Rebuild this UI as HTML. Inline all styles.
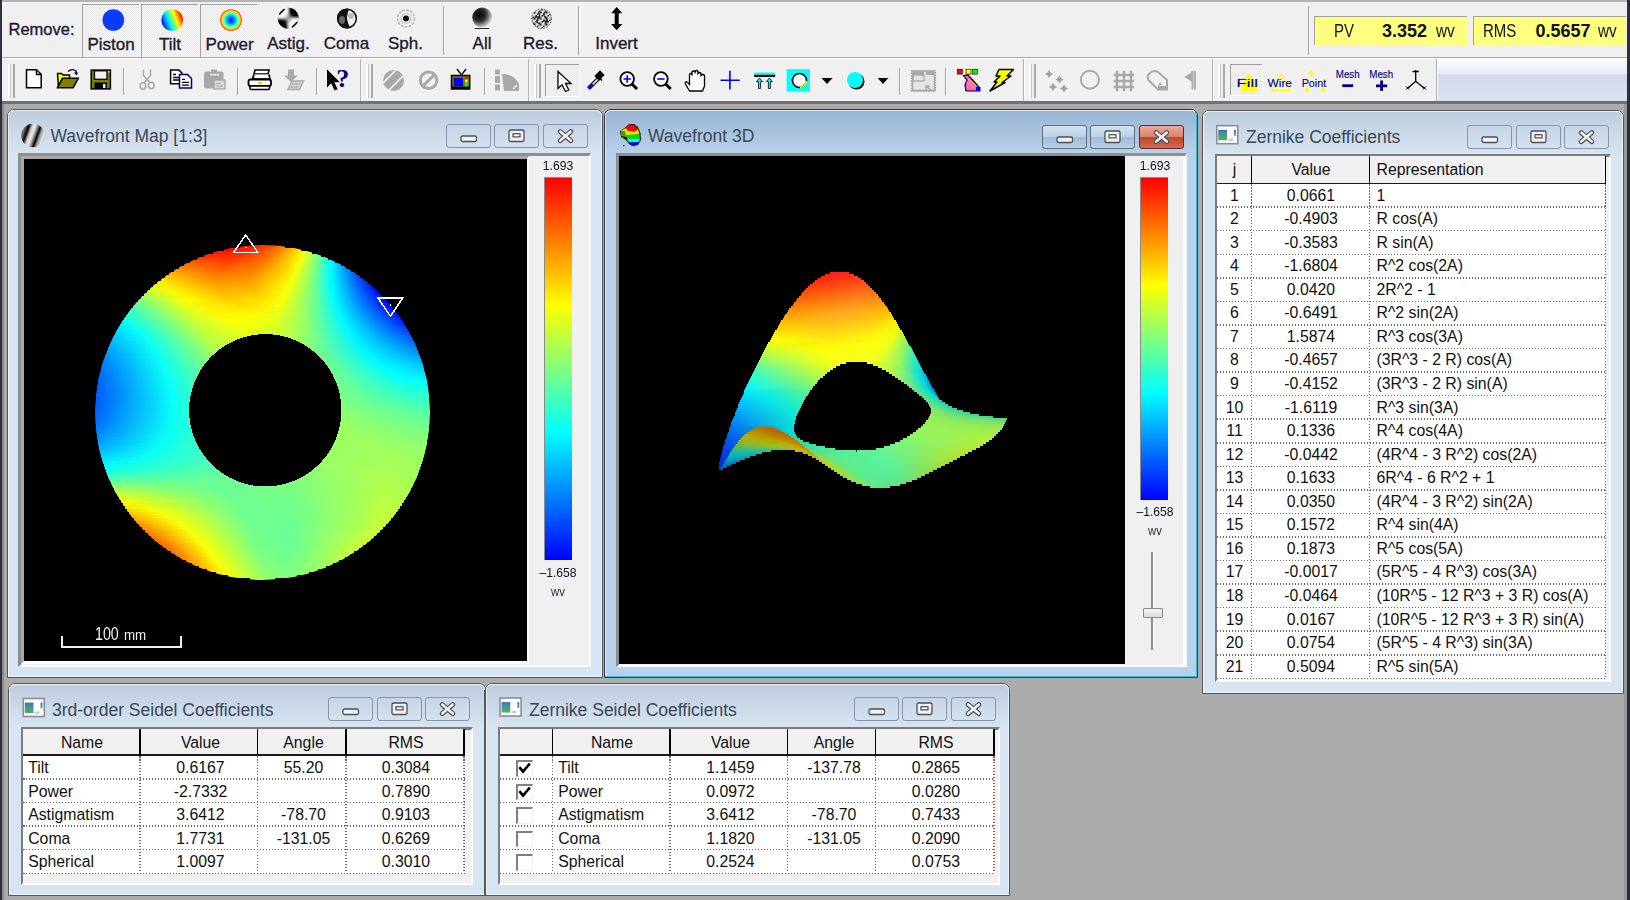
<!DOCTYPE html>
<html><head><meta charset="utf-8"><title>Wavefront</title><style>*{box-sizing:border-box;margin:0;padding:0}
html,body{width:1630px;height:900px;overflow:hidden}
body{position:relative;background:#ababab;font-family:"Liberation Sans",sans-serif;color:#000}
.a{position:absolute}
svg.a{overflow:visible}
.t{line-height:1;white-space:nowrap}
.tl{color:#1e1a2e;-webkit-text-stroke:0.35px #1e1a2e}
.win{border:1px solid #52565c;border-radius:7px 7px 0 0;background:#d7e4f2}
.tg{background:linear-gradient(#bdccdc,#d7e4f2);border-radius:6px 6px 0 0}
.act{background:#b9d1ea;border-color:#30363c}
.act .tg{background:linear-gradient(#98b3d2,#b9d1ea)}
.ttl{color:#3a4756}
.btn{border:1px solid #8595ae;border-radius:3px;background:linear-gradient(#c6d5e5,#d3e0ee)}
.abtn{border:1px solid #5d6d82;border-radius:3px;background:linear-gradient(#d2e2f2 0,#bdd1e7 48%,#a1bbd8 52%,#b9cfe7 100%)}
.cbtn{border:1px solid #5e2a26;border-radius:3px;background:linear-gradient(#eaa897 0,#da8470 48%,#c3452c 52%,#d06a52 100%)}
.sunk{border-top:2px solid #8c8c8c;border-left:2px solid #8c8c8c;border-bottom:2px solid #fff;border-right:2px solid #fff}
.cb{background:linear-gradient(#f00,#ff0 33.33%,#0ff 66.67%,#00f)}
.dh{background:repeating-linear-gradient(90deg,#6a6a6a 0 1.5px,transparent 1.5px 3px)}
.dv{background:repeating-linear-gradient(180deg,#6a6a6a 0 1.5px,transparent 1.5px 3px)}
</style></head><body><div class="a" style="left:0px;top:0px;width:1630px;height:102px;background:#f0f0f0"></div><div class="a" style="left:0px;top:0px;width:1630px;height:2px;background:#b4b4b4"></div><div class="a" style="left:0px;top:57px;width:1630px;height:2px;background:#a8a8a8;border-bottom:1px solid #fff"></div><div class="a" style="left:0px;top:101px;width:1630px;height:3px;background:#707070"></div><div class="a" style="left:0px;top:0px;width:2px;height:900px;background:#2e2e3a"></div><div class="a" style="left:1627px;top:0px;width:3px;height:900px;background:#2e2e3a"></div><div class="a" style="left:1624px;top:104px;width:3px;height:796px;background:#9a9a9a"></div><div class="a" style="left:2px;top:104px;width:2px;height:796px;background:#8a8a8a"></div><div class="a t tl" style="left:8.5px;top:21.32px;font-size:16.5px;">Remove:</div><div class="a" style="left:82px;top:4px;width:57px;height:53px;border-top:1px solid #a0a0a0;border-left:1px solid #a0a0a0;background:repeating-conic-gradient(#f6f6f6 0 25%,#e9e9e9 0 50%) 0 0/2px 2px"></div><div class="a" style="left:141px;top:4px;width:57px;height:53px;border-top:1px solid #a0a0a0;border-left:1px solid #a0a0a0;background:repeating-conic-gradient(#f6f6f6 0 25%,#e9e9e9 0 50%) 0 0/2px 2px"></div><div class="a" style="left:200px;top:4px;width:57px;height:53px;border-top:1px solid #a0a0a0;border-left:1px solid #a0a0a0;background:repeating-conic-gradient(#f6f6f6 0 25%,#e9e9e9 0 50%) 0 0/2px 2px"></div><div class="a t tl" style="left:-39.0px;width:300px;text-align:center;top:36.10px;font-size:17px;">Piston</div><div class="a t tl" style="left:20.0px;width:300px;text-align:center;top:36.10px;font-size:17px;">Tilt</div><div class="a t tl" style="left:79.5px;width:300px;text-align:center;top:36.10px;font-size:17px;">Power</div><div class="a t tl" style="left:138.5px;width:300px;text-align:center;top:34.90px;font-size:17px;">Astig.</div><div class="a t tl" style="left:196.5px;width:300px;text-align:center;top:34.90px;font-size:17px;">Coma</div><div class="a t tl" style="left:255.5px;width:300px;text-align:center;top:34.90px;font-size:17px;">Sph.</div><div class="a t tl" style="left:332.0px;width:300px;text-align:center;top:34.90px;font-size:17px;">All</div><div class="a t tl" style="left:390.5px;width:300px;text-align:center;top:34.90px;font-size:17px;">Res.</div><div class="a t tl" style="left:466.5px;width:300px;text-align:center;top:34.90px;font-size:17px;">Invert</div><div class="a" style="left:443px;top:6px;width:1px;height:49px;background:#a0a0a0;box-shadow:1px 0 0 #fff"></div><div class="a" style="left:578px;top:6px;width:1px;height:49px;background:#a0a0a0;box-shadow:1px 0 0 #fff"></div><div class="a" style="left:1308px;top:6px;width:1px;height:49px;background:#a0a0a0;box-shadow:1px 0 0 #fff"></div><div class="a" style="left:1314px;top:16px;width:153px;height:29px;background:#ffff80;border-top:1.5px solid #a0a0a0;border-left:1.5px solid #a0a0a0"></div><div class="a" style="left:1473px;top:16px;width:153px;height:29px;background:#ffff80;border-top:1.5px solid #a0a0a0;border-left:1.5px solid #a0a0a0"></div><div class="a t " style="left:1333.5px;top:21.75px;font-size:18px;transform:scaleX(0.83);transform-origin:0 0;color:#111">PV</div><div class="a t " style="left:1382.0px;top:21.75px;font-size:18px;font-weight:bold;color:#111">3.352</div><div class="a t " style="left:1435.5px;top:21.75px;font-size:18px;transform:scaleX(0.85);transform-origin:0 0;color:#111">wv</div><div class="a t " style="left:1482.5px;top:21.75px;font-size:18px;transform:scaleX(0.83);transform-origin:0 0;color:#111">RMS</div><div class="a t " style="left:1535.5px;top:21.75px;font-size:18px;font-weight:bold;color:#111">0.5657</div><div class="a t " style="left:1597.5px;top:21.75px;font-size:18px;transform:scaleX(0.85);transform-origin:0 0;color:#111">wv</div><div class="a" style="left:8px;top:64px;width:7px;height:34px;border-left:2px solid #fff;border-right:2px solid #a8a8a8;box-shadow:inset 1px 0 0 #c4c4c4"></div><div class="a" style="left:366px;top:64px;width:7px;height:34px;border-left:2px solid #fff;border-right:2px solid #a8a8a8;box-shadow:inset 1px 0 0 #c4c4c4"></div><div class="a" style="left:534px;top:64px;width:7px;height:34px;border-left:2px solid #fff;border-right:2px solid #a8a8a8;box-shadow:inset 1px 0 0 #c4c4c4"></div><div class="a" style="left:1029px;top:64px;width:7px;height:34px;border-left:2px solid #fff;border-right:2px solid #a8a8a8;box-shadow:inset 1px 0 0 #c4c4c4"></div><div class="a" style="left:1218px;top:64px;width:7px;height:34px;border-left:2px solid #fff;border-right:2px solid #a8a8a8;box-shadow:inset 1px 0 0 #c4c4c4"></div><div class="a" style="left:360px;top:59px;width:2px;height:42px;background:#b0b0b0;border-right:1px solid #fff"></div><div class="a" style="left:528px;top:59px;width:2px;height:42px;background:#b0b0b0;border-right:1px solid #fff"></div><div class="a" style="left:1023px;top:59px;width:2px;height:42px;background:#b0b0b0;border-right:1px solid #fff"></div><div class="a" style="left:1212px;top:59px;width:2px;height:42px;background:#b0b0b0;border-right:1px solid #fff"></div><div class="a" style="left:1436px;top:59px;width:2px;height:42px;background:#b0b0b0;border-right:1px solid #fff"></div><div class="a" style="left:123px;top:68px;width:1px;height:27px;background:#a0a0a0;box-shadow:1px 0 0 #fff"></div><div class="a" style="left:237px;top:68px;width:1px;height:27px;background:#a0a0a0;box-shadow:1px 0 0 #fff"></div><div class="a" style="left:316px;top:68px;width:1px;height:27px;background:#a0a0a0;box-shadow:1px 0 0 #fff"></div><div class="a" style="left:484px;top:68px;width:1px;height:27px;background:#a0a0a0;box-shadow:1px 0 0 #fff"></div><div class="a" style="left:899px;top:68px;width:1px;height:27px;background:#a0a0a0;box-shadow:1px 0 0 #fff"></div><div class="a" style="left:945px;top:68px;width:1px;height:27px;background:#a0a0a0;box-shadow:1px 0 0 #fff"></div><div class="a" style="left:1438px;top:59px;width:189px;height:42px;background:linear-gradient(#fbfcfd 0,#e8ecf5 35%,#d2d9ea 38%,#dbe1f0 100%)"></div><div class="a" style="left:545px;top:64px;width:34px;height:32px;border-top:1px solid #a0a0a0;border-left:1px solid #a0a0a0;box-shadow:1px 1px 0 #fff;background:repeating-conic-gradient(#f6f6f6 0 25%,#e6e6e6 0 50%) 0 0/2px 2px"></div><div class="a" style="left:1230px;top:64px;width:32px;height:31px;border-top:1px solid #a0a0a0;border-left:1px solid #a0a0a0;box-shadow:1px 1px 0 #fff;background:repeating-conic-gradient(#f6f6f6 0 25%,#e6e6e6 0 50%) 0 0/2px 2px"></div><svg class="a" style="left:0;top:0" width="1630" height="102" viewBox="0 0 1630 102">
<defs>
<linearGradient id="gtilt" x1="0.05" y1="0.68" x2="0.95" y2="0.32"><stop offset="0" stop-color="#0010ff"/><stop offset=".3" stop-color="#00e0ff"/><stop offset=".5" stop-color="#60ff90"/><stop offset=".68" stop-color="#ffff00"/><stop offset="1" stop-color="#ff1000"/></linearGradient>
<radialGradient id="gpow"><stop offset="0" stop-color="#0010ff"/><stop offset=".35" stop-color="#0090ff"/><stop offset=".55" stop-color="#00ffff"/><stop offset=".72" stop-color="#a0ff60"/><stop offset=".85" stop-color="#ffd000"/><stop offset="1" stop-color="#ff2000"/></radialGradient>
<radialGradient id="gall" cx=".35" cy=".35" r=".75"><stop offset="0" stop-color="#000"/><stop offset=".45" stop-color="#303030"/><stop offset=".8" stop-color="#b8b8b8"/><stop offset="1" stop-color="#fff"/></radialGradient>
<radialGradient id="gblk"><stop offset="0" stop-color="#000"/><stop offset=".5" stop-color="#111"/><stop offset="1" stop-color="#000" stop-opacity="0"/></radialGradient>
<radialGradient id="gwht"><stop offset="0" stop-color="#fff"/><stop offset=".5" stop-color="#eee"/><stop offset="1" stop-color="#fff" stop-opacity="0"/></radialGradient>
<pattern id="pres" width="6" height="6" patternUnits="userSpaceOnUse"><rect width="6" height="6" fill="#e0e0e0"/><rect x="0" y="0" width="1.5" height="1.5" fill="#111"/><rect x="3" y="1.5" width="1.5" height="1.5" fill="#333"/><rect x="1.5" y="3" width="1.5" height="1.5" fill="#222"/><rect x="4.5" y="4.5" width="1.5" height="1.5" fill="#444"/><rect x="4.5" y="0" width="1.5" height="1.5" fill="#777"/><rect x="0" y="4.5" width="1.5" height="1.5" fill="#666"/></pattern>
<filter id="fbl" x="-20%" y="-20%" width="140%" height="140%"><feGaussianBlur stdDeviation="1.3"/></filter><clipPath id="cast"><circle cx="288.3" cy="18.3" r="10.6"/></clipPath><radialGradient id="gaB" gradientUnits="userSpaceOnUse" cx="288.3" cy="18.3" r="11"><stop offset="0" stop-color="#000" stop-opacity="0"/><stop offset=".55" stop-color="#000" stop-opacity=".95"/><stop offset="1" stop-color="#000"/></radialGradient><radialGradient id="gaW" gradientUnits="userSpaceOnUse" cx="288.3" cy="18.3" r="11"><stop offset="0" stop-color="#fff" stop-opacity="0"/><stop offset=".5" stop-color="#fff" stop-opacity=".95"/><stop offset="1" stop-color="#fff"/></radialGradient>
<clipPath id="ccom"><circle cx="347" cy="18.5" r="10"/></clipPath>
<clipPath id="cfr"><circle cx="393.6" cy="80.4" r="10.5"/></clipPath>
</defs>
<!-- row1 -->
<circle cx="113.3" cy="20" r="10.8" fill="#0a3cff"/>
<circle cx="172.2" cy="20" r="10.8" fill="url(#gtilt)"/>
<circle cx="231" cy="20" r="10.8" fill="url(#gpow)"/>
<g clip-path="url(#cast)"><rect x="277" y="7" width="23" height="23" fill="#a0a0a0"/>
<g filter="url(#fbl)"><path d="M288.3 18.3 L288.3 7 L300 7 L300 18.3 Z" fill="url(#gaB)"/><path d="M288.3 18.3 L288.3 30 L277 30 L277 18.3 Z" fill="url(#gaB)"/>
<path d="M288.3 18.3 L288.3 7 L277 7 L277 18.3 Z" fill="url(#gaW)"/><path d="M288.3 18.3 L288.3 30 L300 30 L300 18.3 Z" fill="url(#gaW)"/></g>
<path d="M279 14.5 L284.5 9" stroke="#222" stroke-width="1.8"/><path d="M292 27.5 L297.5 22" stroke="#222" stroke-width="1.8"/>
</g>
<g clip-path="url(#ccom)"><rect x="336" y="8" width="22" height="22" fill="#f0f0f0"/><path d="M337 8 L350 8 Q343 18 352 30 L337 30 Z" fill="#111"/><ellipse cx="342" cy="20" rx="3" ry="4" fill="#666"/><ellipse cx="351" cy="16" rx="3" ry="3" fill="#bbb"/></g>
<circle cx="347" cy="18.5" r="9.3" fill="none" stroke="#111" stroke-width="1.6"/>
<circle cx="406" cy="18.5" r="8.5" fill="none" stroke="#b0b0b0" stroke-width="1.5" stroke-dasharray="2.5 1.5"/>
<circle cx="406" cy="18.5" r="5" fill="none" stroke="#d0d0d0" stroke-width="1.5"/>
<circle cx="406" cy="18.5" r="3" fill="#111"/>
<circle cx="482.2" cy="17.6" r="10" fill="url(#gall)"/>
<path d="M474 27 Q482 30 490 27" fill="none" stroke="#fff" stroke-width="1.5"/><path d="M475 28.5 L489 28.5" stroke="#222" stroke-width="1"/>
<circle cx="541.6" cy="18.7" r="9.8" fill="url(#pres)"/>
<circle cx="541.6" cy="18.7" r="9.8" fill="none" stroke="#444" stroke-width="1" stroke-dasharray="1.5 1.5"/>
<path d="M538 12.5 q3 3 0 6 q-3 3 1 5 M544.5 12 q-2 4 2 6 q2 3 -1 5 M535 17 h4 M543 21 h5" fill="none" stroke="#222" stroke-width="1.3"/>
<path d="M616.7 7 L622.3 13.2 L618.7 13.2 L618.7 24 L622.3 24 L616.7 30.3 L611.1 24 L614.7 24 L614.7 13.2 L611.1 13.2 Z" fill="#000"/>
<!-- row2: new -->
<path d="M26.5 69.7 H36.5 L41.2 74.4 V87.7 H26.5 Z" fill="#fff" stroke="#000" stroke-width="1.5"/>
<path d="M36.5 69.7 V74.4 H41.2" fill="none" stroke="#000" stroke-width="1.5"/>
<!-- open -->
<path d="M57.5 73.5 H61.5 L63 75 H69.5 V79 H62 L58.5 87.5 Z" fill="#ffff00" stroke="#000" stroke-width="1.5"/>
<path d="M57.5 87.7 L62.5 78.3 H78.3 L73.2 87.7 Z" fill="#808000" stroke="#000" stroke-width="1.5"/>
<path d="M68 71.5 Q72 68 76 71 L76.5 73.5" fill="none" stroke="#000" stroke-width="1.4"/><path d="M74 72.5 L78 72.5 L76.5 75.5 Z" fill="#000"/>
<!-- save -->
<rect x="91.2" y="70.1" width="19.2" height="18.8" fill="#808000" stroke="#000" stroke-width="1.5"/>
<rect x="94.5" y="70.8" width="12.5" height="8.5" fill="#f0f0f0" stroke="#000" stroke-width="1.3"/>
<rect x="94.5" y="82.5" width="12.5" height="6.5" fill="#000"/><rect x="103" y="84" width="2.5" height="4" fill="#eee"/>
<rect x="108" y="71" width="1.5" height="1.5" fill="#fff"/>
<!-- cut (gray) -->
<g fill="none" stroke="#a8a8a8" stroke-width="1.5"><path d="M143.5 69.5 V75.5 L150 83 M150.5 69.5 V75.5 L144 83"/><ellipse cx="143" cy="86" rx="2.8" ry="3.2"/><ellipse cx="151.3" cy="85.5" rx="2.8" ry="3.2"/></g>
<!-- copy -->
<path d="M170.6 70.1 H179 L182 73 V83.8 H170.6 Z" fill="#fff" stroke="#000" stroke-width="1.5"/>
<path d="M173 74.5 h3 M173 77.5 h6 M173 80 h6" stroke="#000" stroke-width="1.3"/>
<path d="M179.5 74.5 H187.5 L191.5 78.5 V88 H179.5 Z" fill="#fff" stroke="#000080" stroke-width="1.5"/>
<path d="M182 79.3 h3 M182 82.3 h7 M182 85.2 h7" stroke="#000" stroke-width="1.3"/>
<!-- paste gray -->
<rect x="204" y="71.5" width="19.5" height="17" rx="2" fill="#a8a8a8"/><rect x="211" y="69.5" width="6" height="3" fill="#a8a8a8"/><rect x="210" y="74" width="9" height="1.3" fill="#fff"/>
<rect x="214" y="80" width="11" height="9" fill="#d8d8d8" stroke="#a8a8a8" stroke-width="1.3"/><path d="M216 83.5 h5 M216 86 h7" stroke="#a8a8a8" stroke-width="1.2"/>
<!-- print -->
<path d="M255 70 H269 L268 74 H254 Z" fill="#fff" stroke="#000" stroke-width="1.6"/>
<path d="M254 74.5 L252.5 79 H270 L269 74.5" fill="#fff" stroke="#000" stroke-width="1.6"/>
<rect x="248.5" y="79.5" width="22.5" height="6.5" rx="2" fill="#fff" stroke="#000" stroke-width="1.8"/>
<rect x="258" y="82" width="4.5" height="1.8" fill="#e0d000"/>
<rect x="250" y="86" width="19.5" height="3.5" rx="1" fill="#fff" stroke="#000" stroke-width="1.6"/>
<!-- import gray -->
<path d="M288 69.5 H294 V75.5 H298 L291 82 L284 75.5 H288 Z" fill="#a8a8a8"/>
<path d="M288 89.5 L292 81 H303.5 L299.5 89.5 Z" fill="#d0d0d0" stroke="#a8a8a8" stroke-width="1.4"/><path d="M292 84 h8 M290.5 87 h8" stroke="#a8a8a8" stroke-width="1.1"/>
<!-- help -->
<path d="M327 69.3 V87.5 L331.2 83.3 L334.6 90.6 L337.6 89.3 L334.4 82.2 L339.8 82.2 Z" fill="#000"/>
<text x="336.3" y="86.8" font-family="Liberation Serif" font-weight="bold" font-size="26" fill="#000080">?</text>
<!-- fringe gray -->
<g clip-path="url(#cfr)"><rect x="382" y="69" width="24" height="24" fill="#a8a8a8"/><path d="M382 84 L397 69 M386 93 L405 74" stroke="#f0f0f0" stroke-width="1.6"/></g>
<!-- no symbol -->
<circle cx="428.6" cy="80.2" r="8.3" fill="none" stroke="#a8a8a8" stroke-width="3"/><path d="M423 86 L434.5 74.5" stroke="#a8a8a8" stroke-width="3"/>
<!-- TV -->
<path d="M457 69 L461.5 75 L466 69" fill="none" stroke="#000" stroke-width="1.3"/>
<rect x="451.5" y="75.5" width="18.2" height="13.5" fill="#808000" stroke="#000" stroke-width="1.5"/>
<rect x="453.6" y="77.8" width="9.5" height="8.3" fill="#0000ff"/><rect x="451.5" y="86.5" width="18" height="2.5" fill="#000"/>
<rect x="465" y="77" width="2.5" height="2.5" fill="#ff0000"/><rect x="465" y="79.5" width="2.5" height="2.5" fill="#ffff00"/><rect x="465" y="82" width="2.5" height="2.5" fill="#00ff00"/><rect x="465" y="84.5" width="2.5" height="2" fill="#00ff00"/>
<!-- histogram gray -->
<rect x="495" y="69.5" width="5" height="5" fill="#a8a8a8"/><rect x="495" y="76" width="5" height="7" fill="#a8a8a8"/><rect x="495" y="84.5" width="5" height="6" fill="#a8a8a8"/>
<path d="M502 74 Q514 74 519 84 V91 H504 Z" fill="#a8a8a8"/><path d="M513 89 L517 85" stroke="#fff" stroke-width="1.2"/>
<!-- pointer -->
<path d="M558 71.5 V88.5 L562 84.8 L565.5 91.5 L568.8 90 L565.5 83.5 L571 83.5 Z" fill="#fff" stroke="#000" stroke-width="1.3" stroke-linejoin="miter"/>
<!-- eyedropper -->
<path d="M588 87 L597.5 77.5 L599.5 79.5 L590 89 Z" fill="#fff" stroke="#000" stroke-width="1.2"/>
<path d="M587.5 87.8 L592 83.5 L594 85.5 L589.5 89.5 Z" fill="#0000ff"/>
<path d="M595.5 76 L600 71.5 L603.5 75 L599 79.5 Z M596 74.5 L602 80.5" fill="#000" stroke="#000" stroke-width="1.6"/>
<!-- zoom + -->
<circle cx="627.2" cy="79" r="6.8" fill="#fff" stroke="#000" stroke-width="1.8"/><path d="M632 84 L637 89" stroke="#000" stroke-width="3"/><path d="M623.5 79 h7.4 M627.2 75.3 v7.4" stroke="#0000ff" stroke-width="1.6"/>
<!-- zoom - -->
<circle cx="660.9" cy="79" r="6.8" fill="#fff" stroke="#000" stroke-width="1.8"/><path d="M665.7 84 L670.7 89" stroke="#000" stroke-width="3"/><path d="M657.2 79 h7.4" stroke="#0000ff" stroke-width="1.6"/>
<!-- hand -->
<path d="M689.5 91 L685.5 84 Q684.5 81.5 687 82 L689.5 84.5 V74.5 Q690.5 72.5 692 74.5 V72 Q693.5 70 695 72 V71.5 Q696.5 69.5 698 71.5 V73.5 Q699.5 71.5 701 73.5 V75.5 Q703 73.5 704.5 75.5 V86 L702.5 91 Z" fill="#fff" stroke="#000" stroke-width="1.3"/>
<!-- crosshair -->
<path d="M720.5 80.2 H739.8 M729.9 70.8 V89.6" stroke="#0000ff" stroke-width="1.6"/>
<!-- arrows -->
<rect x="754.2" y="72.5" width="21" height="2.3" fill="#00ffff"/><rect x="754.2" y="74.8" width="21" height="2.2" fill="#000"/>
<path d="M759.5 78 L756.5 81.5 H758.5 V88.5 H760.5 V81.5 H762.5 Z M769.4 78 L766.4 81.5 H768.4 V88.5 H770.4 V81.5 H772.4 Z" fill="#00ffff" stroke="#000" stroke-width="0.8"/>
<!-- cyan box circle -->
<rect x="786.7" y="69.2" width="23.3" height="22.4" fill="#00ffff"/>
<circle cx="799.5" cy="80.5" r="7" fill="#fff" stroke="#000" stroke-width="1.6"/>
<path d="M806.5 81 A7 7 0 0 1 800 87.5" fill="none" stroke="#ffff00" stroke-width="1.6"/>
<path d="M821.5 78 H832.5 L827 84 Z" fill="#000"/>
<circle cx="856.5" cy="81.5" r="8" fill="#000"/><circle cx="855" cy="80" r="8" fill="#00ffff"/>
<path d="M877.8 78 H888.3 L883 84 Z" fill="#000"/>
<!-- window gray -->
<rect x="911.6" y="70.8" width="23.7" height="20.4" fill="#e4e4e4" stroke="#a8a8a8" stroke-width="1.5" stroke-dasharray="1.5 1"/>
<rect x="913" y="71.5" width="11" height="3.5" fill="#a8a8a8"/><rect x="926" y="71.5" width="8.5" height="3.5" fill="#a8a8a8"/>
<rect x="913" y="75" width="11" height="6" fill="none" stroke="#a8a8a8" stroke-width="1.3"/>
<path d="M926 86 L931 90 M926 90 V86 H930" fill="none" stroke="#a8a8a8" stroke-width="1.3"/>
<rect x="912.5" y="71" width="22" height="19.5" fill="none" stroke="#a8a8a8" stroke-width="1.5"/>
<!-- paint -->
<rect x="957.4" y="69.2" width="5" height="4.9" fill="#ff0000" stroke="#000" stroke-width="0.6"/><rect x="966" y="69.2" width="5" height="4.9" fill="#ffff00" stroke="#000" stroke-width="0.6"/><rect x="972.5" y="69.2" width="5" height="4.9" fill="#00ff00" stroke="#000" stroke-width="0.6"/>
<path d="M963.5 75.5 L968 75 L979 87 L976 91 H966 L965 85 L967 80 Z" fill="#ff60c0" stroke="#000" stroke-width="1.2"/>
<rect x="976" y="87" width="4.5" height="4.5" fill="#0000ff"/><path d="M966.5 82 L974 88 M968 79 L976 86" stroke="#ffff00" stroke-width="0.8"/>
<!-- lightning -->
<path d="M999 69.5 H1013.5 L1007 76 H1011 L1002 82.5 H1005 L990 91 L997 82 H994 L1000 76 H996 Z" fill="#ffff00" stroke="#000" stroke-width="1.5" stroke-linejoin="round"/>
<!-- sparkles gray -->
<g fill="#a0a0a0"><path d="M1049 69.8 L1050.47 72.53 L1053.2 74 L1050.47 75.47 L1049 78.2 L1047.53 75.47 L1044.8 74 L1047.53 72.53 Z"/><path d="M1059.5 75.3 L1060.97 78.03 L1063.7 79.5 L1060.97 80.97 L1059.5 83.7 L1058.03 80.97 L1055.3 79.5 L1058.03 78.03 Z"/><path d="M1053 82.8 L1054.47 85.53 L1057.2 87 L1054.47 88.47 L1053 91.2 L1051.53 88.47 L1048.8 87 L1051.53 85.53 Z"/><path d="M1064 84.3 L1065.47 87.03 L1068.2 88.5 L1065.47 89.97 L1064 92.7 L1062.53 89.97 L1059.8 88.5 L1062.53 87.03 Z"/></g>
<!-- circle gray -->
<circle cx="1089.9" cy="79.7" r="9" fill="none" stroke="#a8a8a8" stroke-width="2"/>
<!-- grid gray -->
<path d="M1117 70.8 V91.2 M1124 70.8 V91.2 M1131 70.8 V91.2 M1113.6 75 H1134 M1113.6 81 H1134 M1113.6 87 H1134" stroke="#a8a8a8" stroke-width="2.5"/>
<!-- tag gray -->
<path d="M1150 73 Q1154 69.5 1158 72 L1167 80 V89.5 H1158 L1148.5 80 Q1146 76 1150 73 Z" fill="none" stroke="#a8a8a8" stroke-width="2"/><path d="M1160 82 L1158 86 L1162 85 Z" fill="#a8a8a8"/><rect x="1158" y="86" width="9" height="3.5" fill="#a8a8a8"/>
<!-- flag gray -->
<path d="M1192.5 71 V89.6 M1195 71 V89.6" stroke="#a8a8a8" stroke-width="1.8"/><path d="M1184.5 77 L1192.5 71.5 V82 L1189 80 Z" fill="#a8a8a8"/>
<!-- Fill / Wire / Point / Mesh -->
<path d="M1248.5 73 L1239.8 91 H1257.9 Z" fill="#ffff00"/>
<path d="M1281 74 L1272 90.5 H1290 Z" fill="none" stroke="#ffff00" stroke-width="1.2"/>
<g fill="#ffff00"><path d="M1311 70 l1.2 2.3 l2.3 1.2 l-2.3 1.2 l-1.2 2.3 l-1.2 -2.3 l-2.3 -1.2 l2.3 -1.2z"/><path d="M1307 86 l1.2 2.3 l2.3 1.2 l-2.3 1.2 l-1.2 2.3 l-1.2 -2.3 l-2.3 -1.2 l2.3 -1.2z"/><path d="M1323 86 l1.2 2.3 l2.3 1.2 l-2.3 1.2 l-1.2 2.3 l-1.2 -2.3 l-2.3 -1.2 l2.3 -1.2z"/></g>
<g font-family="Liberation Sans" font-size="11.5" fill="#000080" stroke="#000080" stroke-width="0.12">
<text x="1236.6" y="86.5" textLength="21.3" lengthAdjust="spacingAndGlyphs">Fill</text>
<text x="1267.5" y="86.5" textLength="24.5" lengthAdjust="spacingAndGlyphs">Wire</text>
<text x="1301.7" y="86.5" textLength="24.5" lengthAdjust="spacingAndGlyphs">Point</text>
<text x="1335.8" y="78.3" textLength="23.9" lengthAdjust="spacingAndGlyphs">Mesh</text>
<text x="1369.3" y="78.3" textLength="23.9" lengthAdjust="spacingAndGlyphs">Mesh</text>
</g>
<rect x="1342.3" y="84.3" width="10.9" height="2.8" fill="#000080"/>
<path d="M1376 85.8 H1387.2 M1381.6 80.5 V91" stroke="#000080" stroke-width="2.8"/>
<!-- axes -->
<path d="M1415.7 70 V81.3 L1407.5 88.5 M1415.7 81.3 L1424.5 88.5 M1412.5 71.5 H1419" fill="none" stroke="#000" stroke-width="1.3"/>
<path d="M1406 86.5 l3 3 M1406 89.5 l3 -3 M1423 86.5 l3 3 M1423 89.5 l3 -3" stroke="#000" stroke-width="1"/>
</svg>
<div class="a win" style="left:7px;top:109px;width:596px;height:569px"><div class="a tg" style="left:0;top:0;width:594px;height:44px"></div></div><div class="a" style="left:8px;top:110px;width:594px;height:567px;border:1px solid rgba(255,255,255,0.55);border-top-color:rgba(255,255,255,0.7);border-radius:6px 6px 0 0"></div><div class="a t ttl" style="left:50.5px;top:127.68px;font-size:17.5px;">Wavefront Map [1:3]</div><div class="a btn" style="left:445.5px;top:124px;width:45px;height:24px"></div><div class="a btn" style="left:494px;top:124px;width:45px;height:24px"></div><div class="a btn" style="left:542.5px;top:124px;width:45px;height:24px"></div><svg class="a" style="left:459.5px;top:135px" width="18" height="8"><rect x="1" y="1" width="15.5" height="5.5" rx="1.5" fill="#f2f2f2" stroke="#4a4f58" stroke-width="1.3"/></svg><svg class="a" style="left:508px;top:129px" width="18" height="14"><rect x="1" y="1" width="15" height="11.5" rx="1.5" fill="#f2f2f2" stroke="#4a4f58" stroke-width="1.3"/><rect x="5" y="4.7" width="7" height="3.2" fill="none" stroke="#4a4f58" stroke-width="1.2"/></svg><svg class="a" style="left:556.5px;top:129px" width="18" height="15"><path d="M3.2 2.6 L13.8 11.6 M13.8 2.6 L3.2 11.6" stroke="#4a4f58" stroke-width="5" stroke-linecap="round"/><path d="M3.2 2.6 L13.8 11.6 M13.8 2.6 L3.2 11.6" stroke="#f2f2f2" stroke-width="2.6" stroke-linecap="round"/></svg><div class="a win act" style="left:604px;top:109px;width:594px;height:569px"><div class="a tg" style="left:0;top:0;width:592px;height:44px"></div></div><div class="a" style="left:605px;top:110px;width:592px;height:567px;border:1px solid rgba(255,255,255,0.55);border-top-color:rgba(255,255,255,0.7);border-radius:6px 6px 0 0;border-right-color:#22c6dc;border-bottom-color:#22c6dc"></div><div class="a t ttl" style="left:648.0px;top:127.68px;font-size:17.5px;">Wavefront 3D</div><div class="a abtn" style="left:1042px;top:124.5px;width:45px;height:24px"></div><div class="a abtn" style="left:1090px;top:124.5px;width:45px;height:24px"></div><div class="a cbtn" style="left:1139px;top:124.5px;width:45px;height:24px"></div><svg class="a" style="left:1056px;top:135.5px" width="18" height="8"><rect x="1" y="1" width="15.5" height="5.5" rx="1.5" fill="#f2f2f2" stroke="#4a4f58" stroke-width="1.3"/></svg><svg class="a" style="left:1104px;top:129.5px" width="18" height="14"><rect x="1" y="1" width="15" height="11.5" rx="1.5" fill="#f2f2f2" stroke="#4a4f58" stroke-width="1.3"/><rect x="5" y="4.7" width="7" height="3.2" fill="none" stroke="#4a4f58" stroke-width="1.2"/></svg><svg class="a" style="left:1153px;top:129.5px" width="18" height="15"><path d="M3.2 2.6 L13.8 11.6 M13.8 2.6 L3.2 11.6" stroke="#4a4f58" stroke-width="5" stroke-linecap="round"/><path d="M3.2 2.6 L13.8 11.6 M13.8 2.6 L3.2 11.6" stroke="#f2f2f2" stroke-width="2.6" stroke-linecap="round"/></svg><div class="a win" style="left:1202px;top:110px;width:422px;height:584px"><div class="a tg" style="left:0;top:0;width:420px;height:44px"></div></div><div class="a" style="left:1203px;top:111px;width:420px;height:582px;border:1px solid rgba(255,255,255,0.55);border-top-color:rgba(255,255,255,0.7);border-radius:6px 6px 0 0"></div><div class="a t ttl" style="left:1246.0px;top:128.68px;font-size:17.5px;">Zernike Coefficients</div><div class="a btn" style="left:1467px;top:124.5px;width:45px;height:24px"></div><div class="a btn" style="left:1516px;top:124.5px;width:45px;height:24px"></div><div class="a btn" style="left:1564px;top:124.5px;width:45px;height:24px"></div><svg class="a" style="left:1481px;top:135.5px" width="18" height="8"><rect x="1" y="1" width="15.5" height="5.5" rx="1.5" fill="#f2f2f2" stroke="#4a4f58" stroke-width="1.3"/></svg><svg class="a" style="left:1530px;top:129.5px" width="18" height="14"><rect x="1" y="1" width="15" height="11.5" rx="1.5" fill="#f2f2f2" stroke="#4a4f58" stroke-width="1.3"/><rect x="5" y="4.7" width="7" height="3.2" fill="none" stroke="#4a4f58" stroke-width="1.2"/></svg><svg class="a" style="left:1578px;top:129.5px" width="18" height="15"><path d="M3.2 2.6 L13.8 11.6 M13.8 2.6 L3.2 11.6" stroke="#4a4f58" stroke-width="5" stroke-linecap="round"/><path d="M3.2 2.6 L13.8 11.6 M13.8 2.6 L3.2 11.6" stroke="#f2f2f2" stroke-width="2.6" stroke-linecap="round"/></svg><div class="a win" style="left:8px;top:683px;width:478px;height:213px"><div class="a tg" style="left:0;top:0;width:476px;height:44px"></div></div><div class="a" style="left:9px;top:684px;width:476px;height:211px;border:1px solid rgba(255,255,255,0.55);border-top-color:rgba(255,255,255,0.7);border-radius:6px 6px 0 0"></div><div class="a t ttl" style="left:52.0px;top:701.68px;font-size:17.5px;">3rd-order Seidel Coefficients</div><div class="a btn" style="left:328px;top:697px;width:45px;height:24px"></div><div class="a btn" style="left:376.5px;top:697px;width:45px;height:24px"></div><div class="a btn" style="left:425px;top:697px;width:45px;height:24px"></div><svg class="a" style="left:342px;top:708px" width="18" height="8"><rect x="1" y="1" width="15.5" height="5.5" rx="1.5" fill="#f2f2f2" stroke="#4a4f58" stroke-width="1.3"/></svg><svg class="a" style="left:390.5px;top:702px" width="18" height="14"><rect x="1" y="1" width="15" height="11.5" rx="1.5" fill="#f2f2f2" stroke="#4a4f58" stroke-width="1.3"/><rect x="5" y="4.7" width="7" height="3.2" fill="none" stroke="#4a4f58" stroke-width="1.2"/></svg><svg class="a" style="left:439px;top:702px" width="18" height="15"><path d="M3.2 2.6 L13.8 11.6 M13.8 2.6 L3.2 11.6" stroke="#4a4f58" stroke-width="5" stroke-linecap="round"/><path d="M3.2 2.6 L13.8 11.6 M13.8 2.6 L3.2 11.6" stroke="#f2f2f2" stroke-width="2.6" stroke-linecap="round"/></svg><div class="a win" style="left:485px;top:683px;width:525px;height:213px"><div class="a tg" style="left:0;top:0;width:523px;height:44px"></div></div><div class="a" style="left:486px;top:684px;width:523px;height:211px;border:1px solid rgba(255,255,255,0.55);border-top-color:rgba(255,255,255,0.7);border-radius:6px 6px 0 0"></div><div class="a t ttl" style="left:529.0px;top:701.68px;font-size:17.5px;">Zernike Seidel Coefficients</div><div class="a btn" style="left:853.5px;top:697px;width:45px;height:24px"></div><div class="a btn" style="left:902px;top:697px;width:45px;height:24px"></div><div class="a btn" style="left:950.5px;top:697px;width:45px;height:24px"></div><svg class="a" style="left:867.5px;top:708px" width="18" height="8"><rect x="1" y="1" width="15.5" height="5.5" rx="1.5" fill="#f2f2f2" stroke="#4a4f58" stroke-width="1.3"/></svg><svg class="a" style="left:916px;top:702px" width="18" height="14"><rect x="1" y="1" width="15" height="11.5" rx="1.5" fill="#f2f2f2" stroke="#4a4f58" stroke-width="1.3"/><rect x="5" y="4.7" width="7" height="3.2" fill="none" stroke="#4a4f58" stroke-width="1.2"/></svg><svg class="a" style="left:964.5px;top:702px" width="18" height="15"><path d="M3.2 2.6 L13.8 11.6 M13.8 2.6 L3.2 11.6" stroke="#4a4f58" stroke-width="5" stroke-linecap="round"/><path d="M3.2 2.6 L13.8 11.6 M13.8 2.6 L3.2 11.6" stroke="#f2f2f2" stroke-width="2.6" stroke-linecap="round"/></svg><svg class="a" style="left:0;top:100px" width="1630" height="630" viewBox="0 100 1630 630">
<defs><linearGradient id="gwmi" x1="0" y1="0.32" x2="1" y2="0.68"><stop offset="0" stop-color="#999"/><stop offset=".12" stop-color="#555"/><stop offset=".22" stop-color="#000"/><stop offset=".34" stop-color="#ccc"/><stop offset=".45" stop-color="#eee"/><stop offset=".56" stop-color="#888"/><stop offset=".66" stop-color="#000"/><stop offset=".76" stop-color="#999"/><stop offset=".9" stop-color="#e8e8e8"/><stop offset="1" stop-color="#aaa"/></linearGradient>
<clipPath id="cwm"><circle cx="33" cy="135.5" r="11.8"/></clipPath>
<radialGradient id="g3d" cx=".5" cy=".5" r=".6"><stop offset="0" stop-color="#ffffff" stop-opacity=".5"/><stop offset="1" stop-color="#fff" stop-opacity="0"/></radialGradient>
<linearGradient id="gti" x1="0" y1="0" x2="0" y2="1"><stop offset="0" stop-color="#3a70b0"/><stop offset=".35" stop-color="#4a90a0"/><stop offset="1" stop-color="#50b060"/></linearGradient>
<linearGradient id="gtb" x1="0" y1="0" x2="0" y2="1"><stop offset="0" stop-color="#4070c0"/><stop offset="1" stop-color="#60c050"/></linearGradient>
</defs>
<circle cx="33" cy="135.5" r="11.8" fill="url(#gwmi)"/>
<!-- 3D blob -->
<g>
<path d="M620 131 L626 127 L629 124 L634 124 L638 127 L640.5 133 L641 140 L638 145 L633 146 L629 144 L626 140 L621 137 Z" fill="#111"/>
<path d="M627 125 L634 125 L637.5 128.5 L635 131.5 L628 131 L626 128 Z" fill="#ff0000"/>
<path d="M621 130.5 L626 128 L628 131 L635 131.5 L638 129 L639.5 134 L630 136 L626 136.5 L621 136 Z" fill="#e8e000"/>
<path d="M621 131 L625 131 L626 136.5 L621 136 Z" fill="#40a000"/>
<path d="M626 135 L639.5 134 L640 138.5 L627 139 Z" fill="#00e000"/>
<path d="M627 139 L640 138.5 L639 142 L629 142.5 Z" fill="#00ffff"/>
<path d="M629 142.5 L639 142 L636 145.3 L631 145.5 Z" fill="#0000ff"/>
<rect x="623" y="145" width="1.5" height="1.2" fill="#333"/>
</g>
<!-- table icons -->
<g id="tic">
<rect x="1216.8" y="125.7" width="21" height="18" fill="#fff" stroke="#8a8e94" stroke-width="1.6"/>
<rect x="1218.3" y="129.8" width="8.7" height="10.5" fill="url(#gti)"/>
<rect x="1234" y="129.8" width="2" height="6" fill="url(#gtb)"/>
<rect x="1228.5" y="138.7" width="4.5" height="2.3" fill="#c8c8c8"/>
</g>
<use href="#tic" transform="translate(-1193.5 572.8)"/>
<use href="#tic" transform="translate(-716.7 572.3)"/>
</svg>
<div class="a" style="left:18px;top:153px;width:573px;height:514px;border-top:3px solid #8e8e8e;border-left:3px solid #8e8e8e;border-bottom:2px solid #fafafa;border-right:2px solid #fafafa;box-shadow:inset 1px 1px 0 #6a6a6a"></div><div class="a" style="left:21px;top:156px;width:568px;height:509px;background:#f0f0f0"></div><div class="a" style="left:21px;top:156px;width:507.5px;height:508px;background:#000;border-top:3px solid #a8a8a8;border-left:3px solid #a8a8a8;border-bottom:3px solid #fff;border-right:2px solid #fff"></div><div class="a" style="left:616px;top:153px;width:571px;height:514px;border-top:3px solid #8e8e8e;border-left:3px solid #8e8e8e;border-bottom:2px solid #fafafa;border-right:2px solid #fafafa;box-shadow:inset 1px 1px 0 #6a6a6a"></div><div class="a" style="left:619px;top:156px;width:566px;height:508.5px;background:#f0f0f0;border-right:2px solid #fff"></div><div class="a" style="left:619px;top:156px;width:506px;height:507.5px;background:#000"></div><svg class="a" style="left:95.2px;top:245px" width="336" height="336" shape-rendering="crispEdges"><defs><linearGradient id="m1"><stop offset="0.011" stop-color="#ff0300"/><stop offset="0.656" stop-color="#ff4800"/><stop offset="0.989" stop-color="#ff8600"/></linearGradient><linearGradient id="m2"><stop offset="0.006" stop-color="#ff0500"/><stop offset="0.422" stop-color="#ff2f00"/><stop offset="0.799" stop-color="#ff9700"/><stop offset="0.994" stop-color="#ffea00"/></linearGradient><linearGradient id="m3"><stop offset="0.005" stop-color="#ff1400"/><stop offset="0.348" stop-color="#ff2a00"/><stop offset="0.652" stop-color="#ff7f00"/><stop offset="0.914" stop-color="#f7ff08"/><stop offset="0.995" stop-color="#bcff43"/></linearGradient><linearGradient id="m4"><stop offset="0.004" stop-color="#ff2900"/><stop offset="0.303" stop-color="#ff2d00"/><stop offset="0.568" stop-color="#ff7100"/><stop offset="0.799" stop-color="#ffea00"/><stop offset="0.850" stop-color="#efff10"/><stop offset="0.962" stop-color="#86ff79"/><stop offset="0.996" stop-color="#59ffa6"/></linearGradient><linearGradient id="m5"><stop offset="0.004" stop-color="#ff3f00"/><stop offset="0.286" stop-color="#ff3600"/><stop offset="0.531" stop-color="#ff7000"/><stop offset="0.744" stop-color="#ffe200"/><stop offset="0.798" stop-color="#f4ff0b"/><stop offset="0.905" stop-color="#89ff76"/><stop offset="0.996" stop-color="#19ffe6"/></linearGradient><linearGradient id="m6"><stop offset="0.003" stop-color="#ff5700"/><stop offset="0.272" stop-color="#ff4100"/><stop offset="0.500" stop-color="#ff7000"/><stop offset="0.700" stop-color="#ffdb00"/><stop offset="0.762" stop-color="#f2ff0d"/><stop offset="0.866" stop-color="#82ff7d"/><stop offset="0.969" stop-color="#00ffff"/><stop offset="0.997" stop-color="#00e0ff"/></linearGradient><linearGradient id="m7"><stop offset="0.003" stop-color="#ff6e00"/><stop offset="0.258" stop-color="#ff4d00"/><stop offset="0.468" stop-color="#ff7000"/><stop offset="0.659" stop-color="#ffd100"/><stop offset="0.729" stop-color="#f7ff08"/><stop offset="0.831" stop-color="#87ff78"/><stop offset="0.933" stop-color="#00ffff"/><stop offset="0.997" stop-color="#00b5ff"/></linearGradient><linearGradient id="m8"><stop offset="0.003" stop-color="#ff8500"/><stop offset="0.254" stop-color="#ff5a00"/><stop offset="0.458" stop-color="#ff7700"/><stop offset="0.638" stop-color="#ffd100"/><stop offset="0.710" stop-color="#f5ff0a"/><stop offset="0.805" stop-color="#8bff74"/><stop offset="0.907" stop-color="#00ffff"/><stop offset="0.997" stop-color="#0093ff"/></linearGradient><linearGradient id="m9"><stop offset="0.003" stop-color="#ff9d00"/><stop offset="0.251" stop-color="#ff6700"/><stop offset="0.449" stop-color="#ff7e00"/><stop offset="0.624" stop-color="#ffd500"/><stop offset="0.692" stop-color="#f3ff0c"/><stop offset="0.788" stop-color="#85ff7a"/><stop offset="0.884" stop-color="#00ffff"/><stop offset="0.997" stop-color="#0075ff"/></linearGradient><linearGradient id="m10"><stop offset="0.003" stop-color="#ffb400"/><stop offset="0.249" stop-color="#ff7500"/><stop offset="0.436" stop-color="#ff8400"/><stop offset="0.607" stop-color="#ffd500"/><stop offset="0.671" stop-color="#f7ff08"/><stop offset="0.767" stop-color="#8aff75"/><stop offset="0.864" stop-color="#00ffff"/><stop offset="0.997" stop-color="#0058ff"/></linearGradient><linearGradient id="m11"><stop offset="0.003" stop-color="#ffca00"/><stop offset="0.249" stop-color="#ff8200"/><stop offset="0.433" stop-color="#ff8d00"/><stop offset="0.597" stop-color="#ffd900"/><stop offset="0.659" stop-color="#f5ff0a"/><stop offset="0.756" stop-color="#85ff7a"/><stop offset="0.854" stop-color="#00faff"/><stop offset="0.997" stop-color="#0045ff"/></linearGradient><linearGradient id="m12"><stop offset="0.002" stop-color="#ffe100"/><stop offset="0.249" stop-color="#ff9000"/><stop offset="0.426" stop-color="#ff9500"/><stop offset="0.584" stop-color="#ffda00"/><stop offset="0.648" stop-color="#f4ff0b"/><stop offset="0.741" stop-color="#8aff75"/><stop offset="0.840" stop-color="#00fbff"/><stop offset="0.998" stop-color="#0033ff"/></linearGradient><linearGradient id="m13"><stop offset="0.002" stop-color="#fff700"/><stop offset="0.249" stop-color="#ff9d00"/><stop offset="0.424" stop-color="#ff9d00"/><stop offset="0.581" stop-color="#ffe100"/><stop offset="0.637" stop-color="#f2ff0d"/><stop offset="0.732" stop-color="#86ff79"/><stop offset="0.827" stop-color="#00fdff"/><stop offset="0.998" stop-color="#0024ff"/></linearGradient><linearGradient id="m14"><stop offset="0.002" stop-color="#f0ff0f"/><stop offset="0.098" stop-color="#ffdf00"/><stop offset="0.299" stop-color="#ffa200"/><stop offset="0.463" stop-color="#ffb000"/><stop offset="0.619" stop-color="#f8ff07"/><stop offset="0.719" stop-color="#8bff74"/><stop offset="0.815" stop-color="#00ffff"/><stop offset="0.998" stop-color="#0016ff"/></linearGradient><linearGradient id="m15"><stop offset="0.002" stop-color="#dcff23"/><stop offset="0.096" stop-color="#fff200"/><stop offset="0.296" stop-color="#ffae00"/><stop offset="0.456" stop-color="#ffb600"/><stop offset="0.611" stop-color="#f6ff09"/><stop offset="0.709" stop-color="#8fff70"/><stop offset="0.811" stop-color="#00fcff"/><stop offset="0.998" stop-color="#000fff"/></linearGradient><linearGradient id="m16"><stop offset="0.002" stop-color="#c7ff38"/><stop offset="0.123" stop-color="#fff600"/><stop offset="0.314" stop-color="#ffb600"/><stop offset="0.470" stop-color="#ffc200"/><stop offset="0.600" stop-color="#f8ff07"/><stop offset="0.703" stop-color="#8dff72"/><stop offset="0.803" stop-color="#00feff"/><stop offset="0.998" stop-color="#000aff"/></linearGradient><linearGradient id="m17"><stop offset="0.002" stop-color="#b1ff4e"/><stop offset="0.154" stop-color="#fff700"/><stop offset="0.331" stop-color="#ffbe00"/><stop offset="0.483" stop-color="#ffce00"/><stop offset="0.593" stop-color="#f6ff09"/><stop offset="0.694" stop-color="#91ff6e"/><stop offset="0.800" stop-color="#00fcff"/><stop offset="0.998" stop-color="#0006ff"/></linearGradient><linearGradient id="m18"><stop offset="0.002" stop-color="#9aff65"/><stop offset="0.183" stop-color="#fff800"/><stop offset="0.352" stop-color="#ffc600"/><stop offset="0.500" stop-color="#ffdb00"/><stop offset="0.586" stop-color="#f4ff0b"/><stop offset="0.689" stop-color="#8fff70"/><stop offset="0.792" stop-color="#00ffff"/><stop offset="0.998" stop-color="#0004ff"/></linearGradient><linearGradient id="m19"><stop offset="0.002" stop-color="#7eff81"/><stop offset="0.199" stop-color="#fefe01"/><stop offset="0.367" stop-color="#ffce00"/><stop offset="0.512" stop-color="#ffe700"/><stop offset="0.580" stop-color="#f2ff0d"/><stop offset="0.685" stop-color="#8dff72"/><stop offset="0.789" stop-color="#00fdff"/><stop offset="0.998" stop-color="#0003ff"/></linearGradient><linearGradient id="m20"><stop offset="0.002" stop-color="#63ff9c"/><stop offset="0.190" stop-color="#edff12"/><stop offset="0.269" stop-color="#ffed00"/><stop offset="0.422" stop-color="#ffd700"/><stop offset="0.567" stop-color="#f5ff0a"/><stop offset="0.673" stop-color="#97ff68"/><stop offset="0.786" stop-color="#00fcff"/><stop offset="0.998" stop-color="#0002ff"/></linearGradient><linearGradient id="m21"><stop offset="0.002" stop-color="#50ffaf"/><stop offset="0.203" stop-color="#e7ff18"/><stop offset="0.284" stop-color="#fff200"/><stop offset="0.434" stop-color="#ffdf00"/><stop offset="0.558" stop-color="#f5ff0a"/><stop offset="0.670" stop-color="#95ff6a"/><stop offset="0.786" stop-color="#00fbff"/><stop offset="0.998" stop-color="#0006ff"/></linearGradient><linearGradient id="m22"><stop offset="0.002" stop-color="#3dffc2"/><stop offset="0.225" stop-color="#e5ff1a"/><stop offset="0.311" stop-color="#fff300"/><stop offset="0.455" stop-color="#ffe900"/><stop offset="0.553" stop-color="#f2ff0d"/><stop offset="0.662" stop-color="#99ff66"/><stop offset="0.783" stop-color="#00fbff"/><stop offset="0.998" stop-color="#0008ff"/></linearGradient><linearGradient id="m23"><stop offset="0.002" stop-color="#2dffd2"/><stop offset="0.113" stop-color="#85ff7a"/><stop offset="0.258" stop-color="#ebff14"/><stop offset="0.351" stop-color="#fff200"/><stop offset="0.493" stop-color="#fff700"/><stop offset="0.582" stop-color="#dcff23"/><stop offset="0.675" stop-color="#84ff7b"/><stop offset="0.786" stop-color="#00f7ff"/><stop offset="0.998" stop-color="#000eff"/></linearGradient><linearGradient id="m24"><stop offset="0.002" stop-color="#1effe1"/><stop offset="0.126" stop-color="#7dff82"/><stop offset="0.251" stop-color="#ddff22"/><stop offset="0.361" stop-color="#fff800"/><stop offset="0.529" stop-color="#f4ff0b"/><stop offset="0.647" stop-color="#a3ff5c"/><stop offset="0.786" stop-color="#00f8ff"/><stop offset="0.998" stop-color="#0015ff"/></linearGradient><linearGradient id="m25"><stop offset="0.002" stop-color="#10ffef"/><stop offset="0.143" stop-color="#7aff85"/><stop offset="0.255" stop-color="#d4ff2b"/><stop offset="0.384" stop-color="#fffc00"/><stop offset="0.525" stop-color="#f1ff0e"/><stop offset="0.644" stop-color="#a2ff5d"/><stop offset="0.785" stop-color="#00f9ff"/><stop offset="0.998" stop-color="#001cff"/></linearGradient><linearGradient id="m26"><stop offset="0.002" stop-color="#03fffc"/><stop offset="0.155" stop-color="#74ff8b"/><stop offset="0.258" stop-color="#cbff34"/><stop offset="0.400" stop-color="#fdff02"/><stop offset="0.536" stop-color="#e9ff16"/><stop offset="0.649" stop-color="#9aff65"/><stop offset="0.785" stop-color="#00faff"/><stop offset="0.998" stop-color="#0024ff"/></linearGradient><linearGradient id="m27"><stop offset="0.002" stop-color="#00f5ff"/><stop offset="0.075" stop-color="#23ffdc"/><stop offset="0.268" stop-color="#c7ff38"/><stop offset="0.409" stop-color="#f8ff07"/><stop offset="0.542" stop-color="#e2ff1d"/><stop offset="0.654" stop-color="#93ff6c"/><stop offset="0.788" stop-color="#00f8ff"/><stop offset="0.998" stop-color="#002dff"/></linearGradient><linearGradient id="m28"><stop offset="0.002" stop-color="#00e8ff"/><stop offset="0.064" stop-color="#0efff1"/><stop offset="0.202" stop-color="#88ff77"/><stop offset="0.327" stop-color="#dcff23"/><stop offset="0.462" stop-color="#f2ff0d"/><stop offset="0.590" stop-color="#c5ff3a"/><stop offset="0.670" stop-color="#7cff83"/><stop offset="0.791" stop-color="#00f7ff"/><stop offset="0.998" stop-color="#0036ff"/></linearGradient><linearGradient id="m29"><stop offset="0.002" stop-color="#00dcff"/><stop offset="0.077" stop-color="#0bfff4"/><stop offset="0.295" stop-color="#c4ff3b"/><stop offset="0.432" stop-color="#eeff11"/><stop offset="0.561" stop-color="#d2ff2d"/><stop offset="0.664" stop-color="#83ff7c"/><stop offset="0.790" stop-color="#00f9ff"/><stop offset="0.998" stop-color="#003fff"/></linearGradient><linearGradient id="m30"><stop offset="0.002" stop-color="#00d3ff"/><stop offset="0.090" stop-color="#0afff5"/><stop offset="0.300" stop-color="#bfff40"/><stop offset="0.436" stop-color="#e9ff16"/><stop offset="0.568" stop-color="#ccff33"/><stop offset="0.663" stop-color="#85ff7a"/><stop offset="0.795" stop-color="#00f9ff"/><stop offset="0.995" stop-color="#004dff"/><stop offset="0.998" stop-color="#004bff"/></linearGradient><linearGradient id="m31"><stop offset="0.002" stop-color="#00c8ff"/><stop offset="0.105" stop-color="#0bfff4"/><stop offset="0.309" stop-color="#bbff44"/><stop offset="0.443" stop-color="#e4ff1b"/><stop offset="0.574" stop-color="#c7ff38"/><stop offset="0.664" stop-color="#82ff7d"/><stop offset="0.798" stop-color="#00f9ff"/><stop offset="0.992" stop-color="#0059ff"/><stop offset="0.998" stop-color="#0055ff"/></linearGradient><linearGradient id="m32"><stop offset="0.002" stop-color="#00bfff"/><stop offset="0.115" stop-color="#09fff6"/><stop offset="0.317" stop-color="#b8ff47"/><stop offset="0.450" stop-color="#e0ff1f"/><stop offset="0.580" stop-color="#c2ff3d"/><stop offset="0.669" stop-color="#7aff85"/><stop offset="0.806" stop-color="#00f6ff"/><stop offset="0.995" stop-color="#0063ff"/><stop offset="0.998" stop-color="#0061ff"/></linearGradient><linearGradient id="m33"><stop offset="0.002" stop-color="#00b4ff"/><stop offset="0.126" stop-color="#08fff7"/><stop offset="0.326" stop-color="#b6ff49"/><stop offset="0.457" stop-color="#dbff24"/><stop offset="0.589" stop-color="#bbff44"/><stop offset="0.674" stop-color="#75ff8a"/><stop offset="0.808" stop-color="#00f7ff"/><stop offset="0.992" stop-color="#006fff"/><stop offset="0.998" stop-color="#006cff"/></linearGradient><linearGradient id="m34"><stop offset="0.002" stop-color="#00acff"/><stop offset="0.138" stop-color="#0afff5"/><stop offset="0.334" stop-color="#b3ff4c"/><stop offset="0.464" stop-color="#d7ff28"/><stop offset="0.594" stop-color="#b7ff48"/><stop offset="0.682" stop-color="#6eff91"/><stop offset="0.816" stop-color="#00f6ff"/><stop offset="0.995" stop-color="#0079ff"/><stop offset="0.998" stop-color="#0078ff"/></linearGradient><linearGradient id="m35"><stop offset="0.002" stop-color="#00a4ff"/><stop offset="0.147" stop-color="#09fff6"/><stop offset="0.341" stop-color="#b1ff4e"/><stop offset="0.471" stop-color="#d4ff2b"/><stop offset="0.604" stop-color="#b1ff4e"/><stop offset="0.820" stop-color="#00f8ff"/><stop offset="0.995" stop-color="#0085ff"/><stop offset="0.998" stop-color="#0084ff"/></linearGradient><linearGradient id="m36"><stop offset="0.002" stop-color="#009dff"/><stop offset="0.156" stop-color="#09fff6"/><stop offset="0.349" stop-color="#afff50"/><stop offset="0.477" stop-color="#d0ff2f"/><stop offset="0.609" stop-color="#adff52"/><stop offset="0.828" stop-color="#00f8ff"/><stop offset="0.998" stop-color="#0090ff"/></linearGradient><linearGradient id="m37"><stop offset="0.002" stop-color="#0094ff"/><stop offset="0.167" stop-color="#0afff5"/><stop offset="0.357" stop-color="#adff52"/><stop offset="0.487" stop-color="#ccff33"/><stop offset="0.617" stop-color="#a7ff58"/><stop offset="0.833" stop-color="#00f8ff"/><stop offset="0.998" stop-color="#009bff"/></linearGradient><linearGradient id="m38"><stop offset="0.002" stop-color="#008dff"/><stop offset="0.172" stop-color="#08fff7"/><stop offset="0.364" stop-color="#abff54"/><stop offset="0.494" stop-color="#c9ff36"/><stop offset="0.626" stop-color="#a2ff5d"/><stop offset="0.841" stop-color="#00f9ff"/><stop offset="0.998" stop-color="#00a7ff"/></linearGradient><linearGradient id="m39"><stop offset="0.002" stop-color="#0086ff"/><stop offset="0.180" stop-color="#09fff6"/><stop offset="0.371" stop-color="#a9ff56"/><stop offset="0.500" stop-color="#c6ff39"/><stop offset="0.632" stop-color="#9fff60"/><stop offset="0.851" stop-color="#00f9ff"/><stop offset="0.998" stop-color="#00b3ff"/></linearGradient><linearGradient id="m40"><stop offset="0.002" stop-color="#0080ff"/><stop offset="0.185" stop-color="#08fff7"/><stop offset="0.379" stop-color="#a8ff57"/><stop offset="0.509" stop-color="#c3ff3c"/><stop offset="0.643" stop-color="#99ff66"/><stop offset="0.861" stop-color="#00faff"/><stop offset="0.998" stop-color="#00beff"/></linearGradient><linearGradient id="m41"><stop offset="0.002" stop-color="#007aff"/><stop offset="0.193" stop-color="#09fff6"/><stop offset="0.385" stop-color="#a7ff58"/><stop offset="0.515" stop-color="#c0ff3f"/><stop offset="0.649" stop-color="#96ff69"/><stop offset="0.872" stop-color="#00fbff"/><stop offset="0.998" stop-color="#00caff"/></linearGradient><linearGradient id="m42"><stop offset="0.002" stop-color="#0076ff"/><stop offset="0.197" stop-color="#08fff7"/><stop offset="0.389" stop-color="#a4ff5b"/><stop offset="0.519" stop-color="#beff41"/><stop offset="0.655" stop-color="#94ff6b"/><stop offset="0.884" stop-color="#00fdff"/><stop offset="0.998" stop-color="#00d5ff"/></linearGradient><linearGradient id="m43"><stop offset="0.002" stop-color="#0071ff"/><stop offset="0.202" stop-color="#08fff7"/><stop offset="0.395" stop-color="#a3ff5c"/><stop offset="0.528" stop-color="#bbff44"/><stop offset="0.666" stop-color="#8eff71"/><stop offset="0.894" stop-color="#02fefd"/><stop offset="0.998" stop-color="#00e0ff"/></linearGradient><linearGradient id="m44"><stop offset="0.002" stop-color="#006cff"/><stop offset="0.206" stop-color="#07fff8"/><stop offset="0.402" stop-color="#a2ff5d"/><stop offset="0.537" stop-color="#b8ff47"/><stop offset="0.674" stop-color="#8bff74"/><stop offset="0.901" stop-color="#06fff9"/><stop offset="0.998" stop-color="#00ebff"/></linearGradient><linearGradient id="m45"><stop offset="0.002" stop-color="#0068ff"/><stop offset="0.211" stop-color="#07fff8"/><stop offset="0.409" stop-color="#a1ff5e"/><stop offset="0.543" stop-color="#b6ff49"/><stop offset="0.682" stop-color="#88ff77"/><stop offset="0.904" stop-color="#0dfff2"/><stop offset="0.998" stop-color="#00f6ff"/></linearGradient><linearGradient id="m46"><stop offset="0.002" stop-color="#0066ff"/><stop offset="0.214" stop-color="#07fff8"/><stop offset="0.415" stop-color="#a0ff5f"/><stop offset="0.552" stop-color="#b4ff4b"/><stop offset="0.691" stop-color="#85ff7a"/><stop offset="0.910" stop-color="#13ffec"/><stop offset="0.998" stop-color="#02fefd"/></linearGradient><linearGradient id="m47"><stop offset="0.002" stop-color="#0062ff"/><stop offset="0.219" stop-color="#08fff7"/><stop offset="0.418" stop-color="#9eff61"/><stop offset="0.557" stop-color="#b2ff4d"/><stop offset="0.699" stop-color="#83ff7c"/><stop offset="0.914" stop-color="#1affe5"/><stop offset="0.998" stop-color="#0bfff4"/></linearGradient><linearGradient id="m48"><stop offset="0.002" stop-color="#0060ff"/><stop offset="0.222" stop-color="#08fff7"/><stop offset="0.424" stop-color="#9dff62"/><stop offset="0.563" stop-color="#b0ff4f"/><stop offset="0.708" stop-color="#81ff7e"/><stop offset="0.923" stop-color="#20ffdf"/><stop offset="0.998" stop-color="#15ffea"/></linearGradient><linearGradient id="m49"><stop offset="0.002" stop-color="#005eff"/><stop offset="0.227" stop-color="#09fff6"/><stop offset="0.431" stop-color="#9cff63"/><stop offset="0.572" stop-color="#aeff51"/><stop offset="0.716" stop-color="#7fff80"/><stop offset="0.929" stop-color="#26ffd9"/><stop offset="0.998" stop-color="#1effe1"/></linearGradient><linearGradient id="m50"><stop offset="0.002" stop-color="#005dff"/><stop offset="0.227" stop-color="#08fff7"/><stop offset="0.437" stop-color="#9cff63"/><stop offset="0.581" stop-color="#acff53"/><stop offset="0.728" stop-color="#7cff83"/><stop offset="0.944" stop-color="#2cffd3"/><stop offset="0.998" stop-color="#27ffd8"/></linearGradient><linearGradient id="m51"><stop offset="0.002" stop-color="#005dff"/><stop offset="0.230" stop-color="#09fff6"/><stop offset="0.440" stop-color="#9aff65"/><stop offset="0.587" stop-color="#abff54"/><stop offset="0.737" stop-color="#7cff83"/><stop offset="0.950" stop-color="#33ffcc"/><stop offset="0.998" stop-color="#2fffd0"/></linearGradient><linearGradient id="m52"><stop offset="0.002" stop-color="#005dff"/><stop offset="0.230" stop-color="#08fff7"/><stop offset="0.446" stop-color="#9aff65"/><stop offset="0.599" stop-color="#a9ff56"/><stop offset="0.758" stop-color="#76ff89"/><stop offset="0.968" stop-color="#39ffc6"/><stop offset="0.998" stop-color="#38ffc7"/></linearGradient><linearGradient id="m53"><stop offset="0.001" stop-color="#005cff"/><stop offset="0.231" stop-color="#07fff8"/><stop offset="0.452" stop-color="#99ff66"/><stop offset="0.607" stop-color="#a7ff58"/><stop offset="0.778" stop-color="#72ff8d"/><stop offset="0.984" stop-color="#40ffbf"/><stop offset="0.999" stop-color="#3fffc0"/></linearGradient><linearGradient id="m54"><stop offset="0.001" stop-color="#005eff"/><stop offset="0.234" stop-color="#09fff6"/><stop offset="0.458" stop-color="#99ff66"/><stop offset="0.619" stop-color="#a6ff59"/><stop offset="0.966" stop-color="#48ffb7"/><stop offset="0.999" stop-color="#47ffb8"/></linearGradient><linearGradient id="m55"><stop offset="0.001" stop-color="#005fff"/><stop offset="0.234" stop-color="#09fff6"/><stop offset="0.464" stop-color="#98ff67"/><stop offset="0.628" stop-color="#a4ff5b"/><stop offset="0.975" stop-color="#4fffb0"/><stop offset="0.999" stop-color="#4effb1"/></linearGradient><linearGradient id="m56"><stop offset="0.001" stop-color="#0062ff"/><stop offset="0.234" stop-color="#09fff6"/><stop offset="0.467" stop-color="#97ff68"/><stop offset="0.637" stop-color="#a3ff5c"/><stop offset="0.984" stop-color="#55ffaa"/><stop offset="0.999" stop-color="#55ffaa"/></linearGradient><linearGradient id="m57"><stop offset="0.001" stop-color="#0065ff"/><stop offset="0.234" stop-color="#09fff6"/><stop offset="0.473" stop-color="#96ff69"/><stop offset="0.649" stop-color="#a2ff5d"/><stop offset="0.993" stop-color="#5bffa4"/><stop offset="0.999" stop-color="#5bffa4"/></linearGradient><linearGradient id="m58"><stop offset="0.001" stop-color="#0068ff"/><stop offset="0.231" stop-color="#08fff7"/><stop offset="0.479" stop-color="#96ff69"/><stop offset="0.661" stop-color="#a1ff5e"/><stop offset="0.999" stop-color="#61ff9e"/></linearGradient><linearGradient id="m59"><stop offset="0.001" stop-color="#006cff"/><stop offset="0.231" stop-color="#09fff6"/><stop offset="0.485" stop-color="#95ff6a"/><stop offset="0.676" stop-color="#a0ff5f"/><stop offset="0.999" stop-color="#67ff98"/></linearGradient><linearGradient id="m60"><stop offset="0.001" stop-color="#0070ff"/><stop offset="0.228" stop-color="#08fff7"/><stop offset="0.488" stop-color="#94ff6b"/><stop offset="0.685" stop-color="#a0ff5f"/><stop offset="0.999" stop-color="#6cff93"/></linearGradient><linearGradient id="m61"><stop offset="0.002" stop-color="#0077ff"/><stop offset="0.227" stop-color="#09fff6"/><stop offset="0.494" stop-color="#93ff6c"/><stop offset="0.704" stop-color="#9fff60"/><stop offset="0.998" stop-color="#72ff8d"/></linearGradient><linearGradient id="m62"><stop offset="0.002" stop-color="#007dff"/><stop offset="0.224" stop-color="#09fff6"/><stop offset="0.497" stop-color="#92ff6d"/><stop offset="0.716" stop-color="#9fff60"/><stop offset="0.998" stop-color="#77ff88"/></linearGradient><linearGradient id="m63"><stop offset="0.002" stop-color="#0083ff"/><stop offset="0.221" stop-color="#0afff5"/><stop offset="0.503" stop-color="#92ff6d"/><stop offset="0.734" stop-color="#9fff60"/><stop offset="0.998" stop-color="#7cff83"/></linearGradient><linearGradient id="m64"><stop offset="0.002" stop-color="#008cff"/><stop offset="0.213" stop-color="#09fff6"/><stop offset="0.506" stop-color="#90ff6f"/><stop offset="0.751" stop-color="#9fff60"/><stop offset="0.998" stop-color="#82ff7d"/></linearGradient><linearGradient id="m65"><stop offset="0.002" stop-color="#0093ff"/><stop offset="0.210" stop-color="#0afff5"/><stop offset="0.512" stop-color="#90ff6f"/><stop offset="0.772" stop-color="#9fff60"/><stop offset="0.998" stop-color="#87ff78"/></linearGradient><linearGradient id="m66"><stop offset="0.002" stop-color="#009dff"/><stop offset="0.199" stop-color="#08fff7"/><stop offset="0.518" stop-color="#8fff70"/><stop offset="0.798" stop-color="#a0ff5f"/><stop offset="0.998" stop-color="#8bff74"/></linearGradient><linearGradient id="m67"><stop offset="0.002" stop-color="#00a6ff"/><stop offset="0.193" stop-color="#09fff6"/><stop offset="0.524" stop-color="#8eff71"/><stop offset="0.819" stop-color="#a1ff5e"/><stop offset="0.998" stop-color="#8dff72"/></linearGradient><linearGradient id="m68"><stop offset="0.002" stop-color="#00b1ff"/><stop offset="0.182" stop-color="#09fff6"/><stop offset="0.534" stop-color="#8eff71"/><stop offset="0.846" stop-color="#a2ff5d"/><stop offset="0.998" stop-color="#90ff6f"/></linearGradient><linearGradient id="m69"><stop offset="0.002" stop-color="#00bbff"/><stop offset="0.173" stop-color="#0afff5"/><stop offset="0.546" stop-color="#8fff70"/><stop offset="0.870" stop-color="#a3ff5c"/><stop offset="0.998" stop-color="#92ff6d"/></linearGradient><linearGradient id="m70"><stop offset="0.002" stop-color="#00c8ff"/><stop offset="0.158" stop-color="#0bfff4"/><stop offset="0.558" stop-color="#8fff70"/><stop offset="0.888" stop-color="#a5ff5a"/><stop offset="0.998" stop-color="#95ff6a"/></linearGradient><linearGradient id="m71"><stop offset="0.002" stop-color="#00d5ff"/><stop offset="0.141" stop-color="#0cfff3"/><stop offset="0.577" stop-color="#91ff6e"/><stop offset="0.902" stop-color="#a6ff59"/><stop offset="0.998" stop-color="#97ff68"/></linearGradient><linearGradient id="m72"><stop offset="0.002" stop-color="#00e2ff"/><stop offset="0.126" stop-color="#0ffff0"/><stop offset="0.612" stop-color="#94ff6b"/><stop offset="0.921" stop-color="#a7ff58"/><stop offset="0.998" stop-color="#99ff66"/></linearGradient><linearGradient id="m73"><stop offset="0.002" stop-color="#00f1ff"/><stop offset="0.155" stop-color="#22ffdd"/><stop offset="0.682" stop-color="#9dff62"/><stop offset="0.948" stop-color="#a6ff59"/><stop offset="0.998" stop-color="#9bff64"/></linearGradient><linearGradient id="m74"><stop offset="0.002" stop-color="#02fefd"/><stop offset="0.715" stop-color="#a1ff5e"/><stop offset="0.961" stop-color="#a6ff59"/><stop offset="0.998" stop-color="#9dff62"/></linearGradient><linearGradient id="m75"><stop offset="0.002" stop-color="#11ffee"/><stop offset="0.795" stop-color="#aaff55"/><stop offset="0.992" stop-color="#a0ff5f"/><stop offset="0.998" stop-color="#9fff60"/></linearGradient><linearGradient id="m76"><stop offset="0.002" stop-color="#21ffde"/><stop offset="0.861" stop-color="#afff50"/><stop offset="0.998" stop-color="#a0ff5f"/></linearGradient><linearGradient id="m77"><stop offset="0.002" stop-color="#33ffcc"/><stop offset="0.600" stop-color="#88ff77"/><stop offset="0.908" stop-color="#b0ff4f"/><stop offset="0.998" stop-color="#a2ff5d"/></linearGradient><linearGradient id="m78"><stop offset="0.002" stop-color="#46ffb9"/><stop offset="0.565" stop-color="#7dff82"/><stop offset="0.892" stop-color="#b1ff4e"/><stop offset="0.998" stop-color="#a4ff5b"/></linearGradient><linearGradient id="m79"><stop offset="0.002" stop-color="#5bffa4"/><stop offset="0.516" stop-color="#72ff8d"/><stop offset="0.891" stop-color="#b2ff4d"/><stop offset="0.998" stop-color="#a5ff5a"/></linearGradient><linearGradient id="m80"><stop offset="0.002" stop-color="#74ff8b"/><stop offset="0.454" stop-color="#69ff96"/><stop offset="0.909" stop-color="#b3ff4c"/><stop offset="0.998" stop-color="#a8ff57"/></linearGradient><linearGradient id="m81"><stop offset="0.002" stop-color="#92ff6d"/><stop offset="0.374" stop-color="#66ff99"/><stop offset="0.620" stop-color="#84ff7b"/><stop offset="0.915" stop-color="#b4ff4b"/><stop offset="0.998" stop-color="#a9ff56"/></linearGradient><linearGradient id="m82"><stop offset="0.002" stop-color="#a9ff56"/><stop offset="0.365" stop-color="#69ff96"/><stop offset="0.611" stop-color="#7eff81"/><stop offset="0.911" stop-color="#b5ff4a"/><stop offset="0.998" stop-color="#acff53"/></linearGradient><linearGradient id="m83"><stop offset="0.002" stop-color="#bfff40"/><stop offset="0.371" stop-color="#6bff94"/><stop offset="0.608" stop-color="#7bff84"/><stop offset="0.910" stop-color="#b6ff49"/><stop offset="0.998" stop-color="#aeff51"/></linearGradient><linearGradient id="m84"><stop offset="0.002" stop-color="#d3ff2c"/><stop offset="0.380" stop-color="#6cff93"/><stop offset="0.607" stop-color="#78ff87"/><stop offset="0.912" stop-color="#b7ff48"/><stop offset="0.998" stop-color="#b0ff4f"/></linearGradient><linearGradient id="m85"><stop offset="0.002" stop-color="#e6ff19"/><stop offset="0.389" stop-color="#6dff92"/><stop offset="0.608" stop-color="#76ff89"/><stop offset="0.918" stop-color="#b8ff47"/><stop offset="0.998" stop-color="#b3ff4c"/></linearGradient><linearGradient id="m86"><stop offset="0.002" stop-color="#f8ff07"/><stop offset="0.394" stop-color="#6eff91"/><stop offset="0.606" stop-color="#74ff8b"/><stop offset="0.924" stop-color="#b9ff46"/><stop offset="0.998" stop-color="#b5ff4a"/></linearGradient><linearGradient id="m87"><stop offset="0.002" stop-color="#fff500"/><stop offset="0.296" stop-color="#8fff70"/><stop offset="0.464" stop-color="#68ff97"/><stop offset="0.661" stop-color="#80ff7f"/><stop offset="0.937" stop-color="#bbff44"/><stop offset="0.998" stop-color="#b8ff47"/></linearGradient><linearGradient id="m88"><stop offset="0.002" stop-color="#ffe400"/><stop offset="0.089" stop-color="#efff10"/><stop offset="0.413" stop-color="#6fff90"/><stop offset="0.613" stop-color="#72ff8d"/><stop offset="0.933" stop-color="#bcff43"/><stop offset="0.998" stop-color="#baff45"/></linearGradient><linearGradient id="m89"><stop offset="0.002" stop-color="#ffd400"/><stop offset="0.105" stop-color="#f3ff0c"/><stop offset="0.415" stop-color="#70ff8f"/><stop offset="0.611" stop-color="#70ff8f"/><stop offset="0.943" stop-color="#bdff42"/><stop offset="0.998" stop-color="#bcff43"/></linearGradient><linearGradient id="m90"><stop offset="0.002" stop-color="#ffc400"/><stop offset="0.122" stop-color="#f5ff0a"/><stop offset="0.418" stop-color="#71ff8e"/><stop offset="0.609" stop-color="#6eff91"/><stop offset="0.949" stop-color="#bfff40"/><stop offset="0.998" stop-color="#bfff40"/></linearGradient><linearGradient id="m91"><stop offset="0.002" stop-color="#ffb500"/><stop offset="0.139" stop-color="#f5ff0a"/><stop offset="0.424" stop-color="#71ff8e"/><stop offset="0.610" stop-color="#6dff92"/><stop offset="0.956" stop-color="#c1ff3e"/><stop offset="0.998" stop-color="#c1ff3e"/></linearGradient><linearGradient id="m92"><stop offset="0.002" stop-color="#ffa900"/><stop offset="0.150" stop-color="#f6ff09"/><stop offset="0.430" stop-color="#71ff8e"/><stop offset="0.617" stop-color="#6cff93"/><stop offset="0.967" stop-color="#c3ff3c"/><stop offset="0.998" stop-color="#c4ff3b"/></linearGradient><linearGradient id="m93"><stop offset="0.002" stop-color="#ff9b00"/><stop offset="0.164" stop-color="#f6ff09"/><stop offset="0.433" stop-color="#72ff8d"/><stop offset="0.615" stop-color="#6bff94"/><stop offset="0.974" stop-color="#c5ff3a"/><stop offset="0.998" stop-color="#c6ff39"/></linearGradient><linearGradient id="m94"><stop offset="0.002" stop-color="#ff9000"/><stop offset="0.172" stop-color="#f8ff07"/><stop offset="0.439" stop-color="#72ff8d"/><stop offset="0.621" stop-color="#6bff94"/><stop offset="0.986" stop-color="#c7ff38"/><stop offset="0.998" stop-color="#c8ff37"/></linearGradient><linearGradient id="m95"><stop offset="0.002" stop-color="#ff8600"/><stop offset="0.180" stop-color="#f8ff07"/><stop offset="0.442" stop-color="#73ff8c"/><stop offset="0.620" stop-color="#6aff95"/><stop offset="0.998" stop-color="#c9ff36"/></linearGradient><linearGradient id="m96"><stop offset="0.002" stop-color="#ff7e00"/><stop offset="0.189" stop-color="#f7ff08"/><stop offset="0.449" stop-color="#73ff8c"/><stop offset="0.628" stop-color="#6aff95"/><stop offset="0.998" stop-color="#cbff34"/></linearGradient><linearGradient id="m97"><stop offset="0.002" stop-color="#ff7600"/><stop offset="0.194" stop-color="#f9ff06"/><stop offset="0.452" stop-color="#74ff8b"/><stop offset="0.631" stop-color="#6aff95"/><stop offset="0.998" stop-color="#ccff33"/></linearGradient><linearGradient id="m98"><stop offset="0.002" stop-color="#ff6f00"/><stop offset="0.200" stop-color="#faff05"/><stop offset="0.455" stop-color="#75ff8a"/><stop offset="0.630" stop-color="#69ff96"/><stop offset="0.998" stop-color="#cdff32"/></linearGradient><linearGradient id="m99"><stop offset="0.002" stop-color="#ff6900"/><stop offset="0.205" stop-color="#faff05"/><stop offset="0.459" stop-color="#76ff89"/><stop offset="0.634" stop-color="#69ff96"/><stop offset="0.998" stop-color="#cdff32"/></linearGradient><linearGradient id="m100"><stop offset="0.002" stop-color="#ff6700"/><stop offset="0.208" stop-color="#faff05"/><stop offset="0.462" stop-color="#78ff87"/><stop offset="0.639" stop-color="#6aff95"/><stop offset="0.998" stop-color="#ccff33"/></linearGradient><linearGradient id="m101"><stop offset="0.002" stop-color="#ff6700"/><stop offset="0.211" stop-color="#f9ff06"/><stop offset="0.470" stop-color="#77ff88"/><stop offset="0.649" stop-color="#6bff94"/><stop offset="0.998" stop-color="#cbff34"/></linearGradient><linearGradient id="m102"><stop offset="0.003" stop-color="#ff6800"/><stop offset="0.210" stop-color="#fbff04"/><stop offset="0.469" stop-color="#7bff84"/><stop offset="0.645" stop-color="#6aff95"/><stop offset="0.997" stop-color="#c9ff36"/></linearGradient><linearGradient id="m103"><stop offset="0.003" stop-color="#ff6f00"/><stop offset="0.210" stop-color="#faff05"/><stop offset="0.478" stop-color="#7bff84"/><stop offset="0.664" stop-color="#6cff93"/><stop offset="0.997" stop-color="#c5ff3a"/></linearGradient><linearGradient id="m104"><stop offset="0.003" stop-color="#ff7200"/><stop offset="0.209" stop-color="#fbff04"/><stop offset="0.466" stop-color="#84ff7b"/><stop offset="0.631" stop-color="#6bff94"/><stop offset="0.831" stop-color="#93ff6c"/><stop offset="0.997" stop-color="#c3ff3c"/></linearGradient><linearGradient id="m105"><stop offset="0.003" stop-color="#ff7a00"/><stop offset="0.209" stop-color="#f9ff06"/><stop offset="0.470" stop-color="#86ff79"/><stop offset="0.639" stop-color="#6dff92"/><stop offset="0.852" stop-color="#95ff6a"/><stop offset="0.997" stop-color="#beff41"/></linearGradient><linearGradient id="m106"><stop offset="0.003" stop-color="#ff8900"/><stop offset="0.199" stop-color="#faff05"/><stop offset="0.467" stop-color="#8aff75"/><stop offset="0.644" stop-color="#6fff90"/><stop offset="0.859" stop-color="#93ff6c"/><stop offset="0.997" stop-color="#b7ff48"/></linearGradient><linearGradient id="m107"><stop offset="0.004" stop-color="#ff9800"/><stop offset="0.195" stop-color="#f7ff08"/><stop offset="0.479" stop-color="#8aff75"/><stop offset="0.670" stop-color="#71ff8e"/><stop offset="0.940" stop-color="#a1ff5e"/><stop offset="0.996" stop-color="#b0ff4f"/></linearGradient><linearGradient id="m108"><stop offset="0.004" stop-color="#ffac00"/><stop offset="0.177" stop-color="#f8ff07"/><stop offset="0.484" stop-color="#8dff72"/><stop offset="0.697" stop-color="#74ff8b"/><stop offset="0.996" stop-color="#a6ff59"/></linearGradient><linearGradient id="m109"><stop offset="0.005" stop-color="#ffc500"/><stop offset="0.149" stop-color="#f8ff07"/><stop offset="0.491" stop-color="#8fff70"/><stop offset="0.734" stop-color="#77ff88"/><stop offset="0.995" stop-color="#9cff63"/></linearGradient><linearGradient id="m110"><stop offset="0.005" stop-color="#ffe200"/><stop offset="0.113" stop-color="#f5ff0a"/><stop offset="0.500" stop-color="#92ff6d"/><stop offset="0.790" stop-color="#7bff84"/><stop offset="0.995" stop-color="#90ff6f"/></linearGradient><linearGradient id="m111"><stop offset="0.007" stop-color="#f5ff0a"/><stop offset="0.514" stop-color="#94ff6b"/><stop offset="0.920" stop-color="#81ff7e"/><stop offset="0.993" stop-color="#85ff7a"/></linearGradient><linearGradient id="m112"><stop offset="0.020" stop-color="#b5ff4a"/><stop offset="0.980" stop-color="#89ff76"/></linearGradient><clipPath id="mc"><circle cx="167.5" cy="167.5" r="167.5"/></clipPath></defs><g clip-path="url(#mc)"><rect x="145" y="0" width="45" height="3" fill="url(#m1)"/><rect x="129" y="3" width="77" height="3" fill="url(#m2)"/><rect x="118" y="6" width="99" height="3" fill="url(#m3)"/><rect x="109" y="9" width="117" height="3" fill="url(#m4)"/><rect x="102" y="12" width="131" height="3" fill="url(#m5)"/><rect x="95" y="15" width="145" height="3" fill="url(#m6)"/><rect x="89" y="18" width="157" height="3" fill="url(#m7)"/><rect x="84" y="21" width="167" height="3" fill="url(#m8)"/><rect x="79" y="24" width="177" height="3" fill="url(#m9)"/><rect x="74" y="27" width="187" height="3" fill="url(#m10)"/><rect x="70" y="30" width="195" height="3" fill="url(#m11)"/><rect x="66" y="33" width="203" height="3" fill="url(#m12)"/><rect x="62" y="36" width="211" height="3" fill="url(#m13)"/><rect x="58" y="39" width="219" height="3" fill="url(#m14)"/><rect x="55" y="42" width="225" height="3" fill="url(#m15)"/><rect x="52" y="45" width="231" height="3" fill="url(#m16)"/><rect x="49" y="48" width="237" height="3" fill="url(#m17)"/><rect x="46" y="51" width="243" height="3" fill="url(#m18)"/><rect x="43" y="54" width="249" height="3" fill="url(#m19)"/><rect x="40" y="57" width="255" height="3" fill="url(#m20)"/><rect x="38" y="60" width="259" height="3" fill="url(#m21)"/><rect x="35" y="63" width="265" height="3" fill="url(#m22)"/><rect x="33" y="66" width="269" height="3" fill="url(#m23)"/><rect x="31" y="69" width="273" height="3" fill="url(#m24)"/><rect x="29" y="72" width="277" height="3" fill="url(#m25)"/><rect x="27" y="75" width="281" height="3" fill="url(#m26)"/><rect x="25" y="78" width="285" height="3" fill="url(#m27)"/><rect x="23" y="81" width="289" height="3" fill="url(#m28)"/><rect x="21" y="84" width="293" height="3" fill="url(#m29)"/><rect x="20" y="87" width="295" height="3" fill="url(#m30)"/><rect x="18" y="90" width="299" height="3" fill="url(#m31)"/><rect x="17" y="93" width="301" height="3" fill="url(#m32)"/><rect x="15" y="96" width="305" height="3" fill="url(#m33)"/><rect x="14" y="99" width="307" height="3" fill="url(#m34)"/><rect x="13" y="102" width="309" height="3" fill="url(#m35)"/><rect x="12" y="105" width="311" height="3" fill="url(#m36)"/><rect x="10" y="108" width="315" height="3" fill="url(#m37)"/><rect x="9" y="111" width="317" height="3" fill="url(#m38)"/><rect x="8" y="114" width="319" height="3" fill="url(#m39)"/><rect x="7" y="117" width="321" height="3" fill="url(#m40)"/><rect x="6" y="120" width="323" height="3" fill="url(#m41)"/><rect x="6" y="123" width="323" height="3" fill="url(#m42)"/><rect x="5" y="126" width="325" height="3" fill="url(#m43)"/><rect x="4" y="129" width="327" height="3" fill="url(#m44)"/><rect x="3" y="132" width="329" height="3" fill="url(#m45)"/><rect x="3" y="135" width="329" height="3" fill="url(#m46)"/><rect x="2" y="138" width="331" height="3" fill="url(#m47)"/><rect x="2" y="141" width="331" height="3" fill="url(#m48)"/><rect x="1" y="144" width="333" height="3" fill="url(#m49)"/><rect x="1" y="147" width="333" height="3" fill="url(#m50)"/><rect x="1" y="150" width="333" height="3" fill="url(#m51)"/><rect x="1" y="153" width="333" height="3" fill="url(#m52)"/><rect x="0" y="156" width="335" height="3" fill="url(#m53)"/><rect x="0" y="159" width="335" height="3" fill="url(#m54)"/><rect x="0" y="162" width="335" height="3" fill="url(#m55)"/><rect x="0" y="165" width="335" height="3" fill="url(#m56)"/><rect x="0" y="168" width="335" height="3" fill="url(#m57)"/><rect x="0" y="171" width="335" height="3" fill="url(#m58)"/><rect x="0" y="174" width="335" height="3" fill="url(#m59)"/><rect x="0" y="177" width="335" height="3" fill="url(#m60)"/><rect x="1" y="180" width="333" height="3" fill="url(#m61)"/><rect x="1" y="183" width="333" height="3" fill="url(#m62)"/><rect x="1" y="186" width="333" height="3" fill="url(#m63)"/><rect x="2" y="189" width="331" height="3" fill="url(#m64)"/><rect x="2" y="192" width="331" height="3" fill="url(#m65)"/><rect x="3" y="195" width="329" height="3" fill="url(#m66)"/><rect x="3" y="198" width="329" height="3" fill="url(#m67)"/><rect x="4" y="201" width="327" height="3" fill="url(#m68)"/><rect x="4" y="204" width="327" height="3" fill="url(#m69)"/><rect x="5" y="207" width="325" height="3" fill="url(#m70)"/><rect x="6" y="210" width="323" height="3" fill="url(#m71)"/><rect x="7" y="213" width="321" height="3" fill="url(#m72)"/><rect x="8" y="216" width="319" height="3" fill="url(#m73)"/><rect x="9" y="219" width="317" height="3" fill="url(#m74)"/><rect x="10" y="222" width="315" height="3" fill="url(#m75)"/><rect x="11" y="225" width="313" height="3" fill="url(#m76)"/><rect x="12" y="228" width="311" height="3" fill="url(#m77)"/><rect x="13" y="231" width="309" height="3" fill="url(#m78)"/><rect x="14" y="234" width="307" height="3" fill="url(#m79)"/><rect x="16" y="237" width="303" height="3" fill="url(#m80)"/><rect x="17" y="240" width="301" height="3" fill="url(#m81)"/><rect x="19" y="243" width="297" height="3" fill="url(#m82)"/><rect x="20" y="246" width="295" height="3" fill="url(#m83)"/><rect x="22" y="249" width="291" height="3" fill="url(#m84)"/><rect x="24" y="252" width="287" height="3" fill="url(#m85)"/><rect x="26" y="255" width="283" height="3" fill="url(#m86)"/><rect x="28" y="258" width="279" height="3" fill="url(#m87)"/><rect x="30" y="261" width="275" height="3" fill="url(#m88)"/><rect x="32" y="264" width="271" height="3" fill="url(#m89)"/><rect x="34" y="267" width="267" height="3" fill="url(#m90)"/><rect x="36" y="270" width="263" height="3" fill="url(#m91)"/><rect x="39" y="273" width="257" height="3" fill="url(#m92)"/><rect x="41" y="276" width="253" height="3" fill="url(#m93)"/><rect x="44" y="279" width="247" height="3" fill="url(#m94)"/><rect x="47" y="282" width="241" height="3" fill="url(#m95)"/><rect x="50" y="285" width="235" height="3" fill="url(#m96)"/><rect x="53" y="288" width="229" height="3" fill="url(#m97)"/><rect x="56" y="291" width="223" height="3" fill="url(#m98)"/><rect x="59" y="294" width="217" height="3" fill="url(#m99)"/><rect x="63" y="297" width="209" height="3" fill="url(#m100)"/><rect x="67" y="300" width="201" height="3" fill="url(#m101)"/><rect x="71" y="303" width="193" height="3" fill="url(#m102)"/><rect x="76" y="306" width="183" height="3" fill="url(#m103)"/><rect x="80" y="309" width="175" height="3" fill="url(#m104)"/><rect x="85" y="312" width="165" height="3" fill="url(#m105)"/><rect x="91" y="315" width="153" height="3" fill="url(#m106)"/><rect x="97" y="318" width="141" height="3" fill="url(#m107)"/><rect x="104" y="321" width="127" height="3" fill="url(#m108)"/><rect x="112" y="324" width="111" height="3" fill="url(#m109)"/><rect x="121" y="327" width="93" height="3" fill="url(#m110)"/><rect x="133" y="330" width="69" height="3" fill="url(#m111)"/><rect x="155" y="333" width="25" height="3" fill="url(#m112)"/></g><circle cx="170.3" cy="165.3" r="76.2" fill="#000"/><path d="M150.7 -10 L138.5 7.6 L163 7.6 Z" fill="none" stroke="#fff" stroke-width="1.5"/><rect x="150" y="1.5" width="1.5" height="1.5" fill="#fff"/><path d="M283 53 L307.8 53 L295.4 71.3 Z" fill="none" stroke="#fff" stroke-width="1.5"/><rect x="294.7" y="59" width="1.5" height="1.5" fill="#fff"/></svg><svg class="a" style="left:700px;top:260px" width="320" height="240" shape-rendering="crispEdges"><defs><linearGradient id="s1"><stop offset="0.026" stop-color="#ff1c17"/><stop offset="0.974" stop-color="#ff281e"/></linearGradient><linearGradient id="s2"><stop offset="0.017" stop-color="#ff1e14"/><stop offset="0.983" stop-color="#ff321d"/></linearGradient><linearGradient id="s3"><stop offset="0.014" stop-color="#ff2412"/><stop offset="0.986" stop-color="#ff3a1b"/></linearGradient><linearGradient id="s4"><stop offset="0.012" stop-color="#ff2810"/><stop offset="0.988" stop-color="#ff421a"/></linearGradient><linearGradient id="s5"><stop offset="0.010" stop-color="#ff2d0f"/><stop offset="0.990" stop-color="#ff4b18"/></linearGradient><linearGradient id="s6"><stop offset="0.009" stop-color="#ff340e"/><stop offset="0.972" stop-color="#ff5017"/><stop offset="0.991" stop-color="#ff5116"/></linearGradient><linearGradient id="s7"><stop offset="0.009" stop-color="#ff390c"/><stop offset="0.922" stop-color="#ff5718"/><stop offset="0.991" stop-color="#ff5815"/></linearGradient><linearGradient id="s8"><stop offset="0.008" stop-color="#ff3f0b"/><stop offset="0.895" stop-color="#ff5e19"/><stop offset="0.992" stop-color="#ff5f13"/></linearGradient><linearGradient id="s9"><stop offset="0.008" stop-color="#ff450a"/><stop offset="0.871" stop-color="#ff6519"/><stop offset="0.992" stop-color="#ff6611"/></linearGradient><linearGradient id="s10"><stop offset="0.007" stop-color="#ff4b0a"/><stop offset="0.836" stop-color="#ff6b1a"/><stop offset="0.993" stop-color="#ff6e10"/></linearGradient><linearGradient id="s11"><stop offset="0.007" stop-color="#ff5209"/><stop offset="0.818" stop-color="#ff731b"/><stop offset="0.993" stop-color="#ff760e"/></linearGradient><linearGradient id="s12"><stop offset="0.006" stop-color="#ff5909"/><stop offset="0.799" stop-color="#ff791b"/><stop offset="0.994" stop-color="#ff7e0c"/></linearGradient><linearGradient id="s13"><stop offset="0.006" stop-color="#ff6008"/><stop offset="0.794" stop-color="#ff801c"/><stop offset="0.994" stop-color="#ff850c"/></linearGradient><linearGradient id="s14"><stop offset="0.006" stop-color="#ff6707"/><stop offset="0.780" stop-color="#ff861c"/><stop offset="0.994" stop-color="#ff8d0a"/></linearGradient><linearGradient id="s15"><stop offset="0.006" stop-color="#ff6d07"/><stop offset="0.773" stop-color="#ff8d1c"/><stop offset="0.994" stop-color="#ff940a"/></linearGradient><linearGradient id="s16"><stop offset="0.006" stop-color="#ff7407"/><stop offset="0.772" stop-color="#ff941c"/><stop offset="0.994" stop-color="#ff9d08"/></linearGradient><linearGradient id="s17"><stop offset="0.005" stop-color="#ff7c06"/><stop offset="0.766" stop-color="#ff9b1c"/><stop offset="0.995" stop-color="#ffa408"/></linearGradient><linearGradient id="s18"><stop offset="0.005" stop-color="#ff8206"/><stop offset="0.755" stop-color="#ffa11c"/><stop offset="0.995" stop-color="#ffae06"/></linearGradient><linearGradient id="s19"><stop offset="0.005" stop-color="#ff8a06"/><stop offset="0.571" stop-color="#ffa123"/><stop offset="0.995" stop-color="#ffb506"/></linearGradient><linearGradient id="s20"><stop offset="0.005" stop-color="#ff9105"/><stop offset="0.550" stop-color="#ffa522"/><stop offset="0.995" stop-color="#ffbd05"/></linearGradient><linearGradient id="s21"><stop offset="0.005" stop-color="#ff9805"/><stop offset="0.534" stop-color="#ffaa21"/><stop offset="0.995" stop-color="#ffc705"/></linearGradient><linearGradient id="s22"><stop offset="0.005" stop-color="#ffa005"/><stop offset="0.500" stop-color="#ffac1e"/><stop offset="0.921" stop-color="#ffc208"/><stop offset="0.995" stop-color="#ffcf04"/></linearGradient><linearGradient id="s23"><stop offset="0.005" stop-color="#ffa705"/><stop offset="0.500" stop-color="#ffb21d"/><stop offset="0.904" stop-color="#ffc709"/><stop offset="0.995" stop-color="#ffd704"/></linearGradient><linearGradient id="s24"><stop offset="0.005" stop-color="#ffae04"/><stop offset="0.482" stop-color="#ffb51b"/><stop offset="0.842" stop-color="#ffc80f"/><stop offset="0.995" stop-color="#fedf03"/></linearGradient><linearGradient id="s25"><stop offset="0.004" stop-color="#ffb604"/><stop offset="0.474" stop-color="#ffba1a"/><stop offset="0.813" stop-color="#ffcd11"/><stop offset="0.996" stop-color="#fcea03"/></linearGradient><linearGradient id="s26"><stop offset="0.004" stop-color="#ffbe04"/><stop offset="0.466" stop-color="#ffbf19"/><stop offset="0.799" stop-color="#ffd312"/><stop offset="0.996" stop-color="#fbf203"/></linearGradient><linearGradient id="s27"><stop offset="0.004" stop-color="#ffc604"/><stop offset="0.450" stop-color="#ffc317"/><stop offset="0.786" stop-color="#ffd813"/><stop offset="0.996" stop-color="#f9f903"/></linearGradient><linearGradient id="s28"><stop offset="0.004" stop-color="#ffcd04"/><stop offset="0.459" stop-color="#ffc917"/><stop offset="0.798" stop-color="#ffde11"/><stop offset="0.996" stop-color="#eff90c"/></linearGradient><linearGradient id="s29"><stop offset="0.004" stop-color="#fed404"/><stop offset="0.451" stop-color="#ffcd15"/><stop offset="0.793" stop-color="#ffe311"/><stop offset="0.972" stop-color="#f2fa0b"/><stop offset="0.996" stop-color="#e4f816"/></linearGradient><linearGradient id="s30"><stop offset="0.004" stop-color="#fedd04"/><stop offset="0.445" stop-color="#ffd214"/><stop offset="0.783" stop-color="#ffe911"/><stop offset="0.949" stop-color="#f1fb0d"/><stop offset="0.996" stop-color="#d4f624"/></linearGradient><linearGradient id="s31"><stop offset="0.004" stop-color="#fee503"/><stop offset="0.438" stop-color="#ffd612"/><stop offset="0.779" stop-color="#ffee10"/><stop offset="0.934" stop-color="#f0fc0f"/><stop offset="0.996" stop-color="#c8f52e"/></linearGradient><linearGradient id="s32"><stop offset="0.004" stop-color="#fded03"/><stop offset="0.439" stop-color="#ffdb12"/><stop offset="0.782" stop-color="#fff30f"/><stop offset="0.920" stop-color="#effd11"/><stop offset="0.996" stop-color="#bdf439"/></linearGradient><linearGradient id="s33"><stop offset="0.004" stop-color="#fdf503"/><stop offset="0.432" stop-color="#ffe010"/><stop offset="0.778" stop-color="#fff80f"/><stop offset="0.906" stop-color="#effe13"/><stop offset="0.996" stop-color="#b1f344"/></linearGradient><linearGradient id="s34"><stop offset="0.004" stop-color="#fcfc04"/><stop offset="0.441" stop-color="#ffe510"/><stop offset="0.796" stop-color="#fffe0c"/><stop offset="0.893" stop-color="#eeff15"/><stop offset="0.996" stop-color="#a4f24f"/></linearGradient><linearGradient id="s35"><stop offset="0.004" stop-color="#f4fd0c"/><stop offset="0.485" stop-color="#ffed13"/><stop offset="0.872" stop-color="#f1ff14"/><stop offset="0.996" stop-color="#97f25b"/></linearGradient><linearGradient id="s36"><stop offset="0.004" stop-color="#eafd16"/><stop offset="0.332" stop-color="#ffec07"/><stop offset="0.768" stop-color="#ffff0e"/><stop offset="0.868" stop-color="#edff19"/><stop offset="0.996" stop-color="#88f169"/></linearGradient><linearGradient id="s37"><stop offset="0.004" stop-color="#e1fc1e"/><stop offset="0.306" stop-color="#fff206"/><stop offset="0.771" stop-color="#ffff0d"/><stop offset="0.863" stop-color="#e9ff1c"/><stop offset="0.989" stop-color="#81f070"/><stop offset="0.996" stop-color="#74f07d"/></linearGradient><linearGradient id="s38"><stop offset="0.003" stop-color="#d8fc27"/><stop offset="0.321" stop-color="#fff706"/><stop offset="0.824" stop-color="#f4ff18"/><stop offset="0.962" stop-color="#8cf266"/><stop offset="0.997" stop-color="#5aee94"/></linearGradient><linearGradient id="s39"><stop offset="0.003" stop-color="#cffc30"/><stop offset="0.357" stop-color="#fffb07"/><stop offset="0.813" stop-color="#f3ff1a"/><stop offset="0.949" stop-color="#90f263"/><stop offset="0.997" stop-color="#4eeda0"/></linearGradient><linearGradient id="s40"><stop offset="0.003" stop-color="#c4fc3a"/><stop offset="0.393" stop-color="#ffff08"/><stop offset="0.802" stop-color="#f2ff1c"/><stop offset="0.943" stop-color="#8bf268"/><stop offset="0.997" stop-color="#42ecab"/></linearGradient><linearGradient id="s41"><stop offset="0.003" stop-color="#bbfc44"/><stop offset="0.421" stop-color="#ffff09"/><stop offset="0.791" stop-color="#f1ff1e"/><stop offset="0.930" stop-color="#8ff365"/><stop offset="0.997" stop-color="#37ecb5"/></linearGradient><linearGradient id="s42"><stop offset="0.003" stop-color="#b1fc4e"/><stop offset="0.448" stop-color="#ffff09"/><stop offset="0.775" stop-color="#f3ff1e"/><stop offset="0.918" stop-color="#92f362"/><stop offset="0.997" stop-color="#2cebbf"/></linearGradient><linearGradient id="s43"><stop offset="0.003" stop-color="#a5fb59"/><stop offset="0.455" stop-color="#ffff0d"/><stop offset="0.765" stop-color="#f1ff20"/><stop offset="0.906" stop-color="#96f45f"/><stop offset="0.997" stop-color="#22eac8"/></linearGradient><linearGradient id="s44"><stop offset="0.003" stop-color="#99fb65"/><stop offset="0.443" stop-color="#fcff12"/><stop offset="0.748" stop-color="#f1ff21"/><stop offset="0.901" stop-color="#94f461"/><stop offset="0.997" stop-color="#19e9d0"/></linearGradient><linearGradient id="s45"><stop offset="0.003" stop-color="#8dfb71"/><stop offset="0.418" stop-color="#f1ff19"/><stop offset="0.720" stop-color="#f5ff20"/><stop offset="0.884" stop-color="#9ef559"/><stop offset="0.997" stop-color="#0fe8d9"/></linearGradient><linearGradient id="s46"><stop offset="0.003" stop-color="#7afb84"/><stop offset="0.351" stop-color="#dcfe26"/><stop offset="0.543" stop-color="#feff18"/><stop offset="0.550" stop-color="#000000"/><stop offset="0.674" stop-color="#000000"/><stop offset="0.680" stop-color="#faff1e"/><stop offset="0.860" stop-color="#acf84e"/><stop offset="0.997" stop-color="#07e7e0"/></linearGradient><linearGradient id="s47"><stop offset="0.003" stop-color="#6bfb93"/><stop offset="0.322" stop-color="#cefb30"/><stop offset="0.506" stop-color="#f3ff1d"/><stop offset="0.512" stop-color="#000000"/><stop offset="0.709" stop-color="#000000"/><stop offset="0.715" stop-color="#ecff26"/><stop offset="0.874" stop-color="#9bf55c"/><stop offset="0.997" stop-color="#00e5e6"/></linearGradient><linearGradient id="s48"><stop offset="0.003" stop-color="#5ffb9e"/><stop offset="0.336" stop-color="#cafb34"/><stop offset="0.482" stop-color="#e9ff22"/><stop offset="0.488" stop-color="#000000"/><stop offset="0.736" stop-color="#000000"/><stop offset="0.742" stop-color="#dfff2d"/><stop offset="0.882" stop-color="#8ef366"/><stop offset="0.997" stop-color="#00dde5"/></linearGradient><linearGradient id="s49"><stop offset="0.003" stop-color="#54fba9"/><stop offset="0.356" stop-color="#c7fb37"/><stop offset="0.464" stop-color="#dfff28"/><stop offset="0.470" stop-color="#000000"/><stop offset="0.757" stop-color="#000000"/><stop offset="0.763" stop-color="#d2ff34"/><stop offset="0.889" stop-color="#7ff173"/><stop offset="0.991" stop-color="#00dde5"/><stop offset="0.997" stop-color="#00d5e5"/></linearGradient><linearGradient id="s50"><stop offset="0.003" stop-color="#49fab3"/><stop offset="0.370" stop-color="#c3fb3a"/><stop offset="0.447" stop-color="#d5ff2e"/><stop offset="0.453" stop-color="#000000"/><stop offset="0.778" stop-color="#000000"/><stop offset="0.784" stop-color="#c5fe3c"/><stop offset="0.885" stop-color="#82f171"/><stop offset="0.991" stop-color="#00d5e4"/><stop offset="0.997" stop-color="#00cce4"/></linearGradient><linearGradient id="s51"><stop offset="0.003" stop-color="#40fabc"/><stop offset="0.395" stop-color="#c3fb3b"/><stop offset="0.430" stop-color="#ccfe35"/><stop offset="0.436" stop-color="#000000"/><stop offset="0.792" stop-color="#000000"/><stop offset="0.798" stop-color="#bbfc43"/><stop offset="0.886" stop-color="#7bf177"/><stop offset="0.985" stop-color="#00d7e4"/><stop offset="0.997" stop-color="#00c4e3"/></linearGradient><linearGradient id="s52"><stop offset="0.003" stop-color="#37fac6"/><stop offset="0.405" stop-color="#bffb3f"/><stop offset="0.417" stop-color="#c2fc3d"/><stop offset="0.422" stop-color="#000000"/><stop offset="0.802" stop-color="#000000"/><stop offset="0.807" stop-color="#b1f94a"/><stop offset="0.888" stop-color="#6bef84"/><stop offset="0.974" stop-color="#00dbe3"/><stop offset="0.997" stop-color="#00b3e1"/></linearGradient><linearGradient id="s53"><stop offset="0.003" stop-color="#2dfacf"/><stop offset="0.264" stop-color="#8af46b"/><stop offset="0.406" stop-color="#b9fa43"/><stop offset="0.412" stop-color="#000000"/><stop offset="0.815" stop-color="#000000"/><stop offset="0.821" stop-color="#a7f752"/><stop offset="0.906" stop-color="#54ec98"/><stop offset="0.974" stop-color="#00d7e2"/><stop offset="0.997" stop-color="#00ace1"/></linearGradient><linearGradient id="s54"><stop offset="0.003" stop-color="#25fad7"/><stop offset="0.272" stop-color="#83f372"/><stop offset="0.390" stop-color="#aef84d"/><stop offset="0.396" stop-color="#000000"/><stop offset="0.829" stop-color="#000000"/><stop offset="0.834" stop-color="#9cf45a"/><stop offset="0.935" stop-color="#2fe7b7"/><stop offset="0.975" stop-color="#00d2e1"/><stop offset="0.997" stop-color="#00a5e0"/></linearGradient><linearGradient id="s55"><stop offset="0.003" stop-color="#1dfae0"/><stop offset="0.286" stop-color="#7ef376"/><stop offset="0.381" stop-color="#a3f755"/><stop offset="0.386" stop-color="#000000"/><stop offset="0.842" stop-color="#000000"/><stop offset="0.847" stop-color="#92f261"/><stop offset="0.969" stop-color="#00dbe1"/><stop offset="0.997" stop-color="#009edf"/></linearGradient><linearGradient id="s56"><stop offset="0.003" stop-color="#14fae8"/><stop offset="0.305" stop-color="#7df377"/><stop offset="0.376" stop-color="#9cf65b"/><stop offset="0.382" stop-color="#000000"/><stop offset="0.854" stop-color="#000000"/><stop offset="0.860" stop-color="#88f069"/><stop offset="0.970" stop-color="#00dbe0"/><stop offset="0.997" stop-color="#0098de"/></linearGradient><linearGradient id="s57"><stop offset="0.003" stop-color="#0cfaf0"/><stop offset="0.323" stop-color="#7bf379"/><stop offset="0.367" stop-color="#91f565"/><stop offset="0.372" stop-color="#000000"/><stop offset="0.867" stop-color="#000000"/><stop offset="0.872" stop-color="#7dee72"/><stop offset="0.970" stop-color="#00dbdf"/><stop offset="0.997" stop-color="#0093dd"/></linearGradient><linearGradient id="s58"><stop offset="0.003" stop-color="#04faf8"/><stop offset="0.341" stop-color="#7af379"/><stop offset="0.358" stop-color="#84f370"/><stop offset="0.363" stop-color="#000000"/><stop offset="0.874" stop-color="#000000"/><stop offset="0.879" stop-color="#73ed7b"/><stop offset="0.976" stop-color="#00d0de"/><stop offset="0.997" stop-color="#0090dc"/></linearGradient><linearGradient id="s59"><stop offset="0.003" stop-color="#02f4fa"/><stop offset="0.320" stop-color="#66f18c"/><stop offset="0.352" stop-color="#76f27d"/><stop offset="0.357" stop-color="#000000"/><stop offset="0.881" stop-color="#000000"/><stop offset="0.886" stop-color="#6aec82"/><stop offset="0.971" stop-color="#00d6dd"/><stop offset="0.997" stop-color="#007adb"/></linearGradient><linearGradient id="s60"><stop offset="0.003" stop-color="#02ecfa"/><stop offset="0.191" stop-color="#2beec3"/><stop offset="0.343" stop-color="#68f18a"/><stop offset="0.348" stop-color="#000000"/><stop offset="0.887" stop-color="#000000"/><stop offset="0.893" stop-color="#65ea86"/><stop offset="0.966" stop-color="#0fdecf"/><stop offset="0.982" stop-color="#00bfdb"/><stop offset="0.997" stop-color="#0078da"/></linearGradient><linearGradient id="s61"><stop offset="0.003" stop-color="#02e5f9"/><stop offset="0.159" stop-color="#1beed4"/><stop offset="0.336" stop-color="#5ff092"/><stop offset="0.341" stop-color="#000000"/><stop offset="0.898" stop-color="#000000"/><stop offset="0.904" stop-color="#61e988"/><stop offset="0.971" stop-color="#0fddcd"/><stop offset="0.987" stop-color="#00b6d9"/><stop offset="0.997" stop-color="#0078d8"/></linearGradient><linearGradient id="s62"><stop offset="0.003" stop-color="#02def9"/><stop offset="0.162" stop-color="#15edd9"/><stop offset="0.332" stop-color="#57ef99"/><stop offset="0.338" stop-color="#000000"/><stop offset="0.905" stop-color="#000000"/><stop offset="0.910" stop-color="#5fe88a"/><stop offset="0.977" stop-color="#12dcca"/><stop offset="0.987" stop-color="#00ccd9"/><stop offset="0.997" stop-color="#0085d7"/></linearGradient><linearGradient id="s63"><stop offset="0.003" stop-color="#02d7f9"/><stop offset="0.171" stop-color="#12ecdb"/><stop offset="0.324" stop-color="#4deea2"/><stop offset="0.329" stop-color="#000000"/><stop offset="0.916" stop-color="#000000"/><stop offset="0.921" stop-color="#5ee789"/><stop offset="0.982" stop-color="#18dcc3"/><stop offset="0.992" stop-color="#04cfd4"/><stop offset="0.997" stop-color="#00aad7"/></linearGradient><linearGradient id="s64"><stop offset="0.003" stop-color="#02cff9"/><stop offset="0.184" stop-color="#11ecdb"/><stop offset="0.321" stop-color="#46eda8"/><stop offset="0.326" stop-color="#000000"/><stop offset="0.922" stop-color="#000000"/><stop offset="0.927" stop-color="#5fe788"/><stop offset="0.992" stop-color="#16dac4"/><stop offset="0.997" stop-color="#09d4cf"/></linearGradient><linearGradient id="s65"><stop offset="0.002" stop-color="#02c8f9"/><stop offset="0.196" stop-color="#10ebdb"/><stop offset="0.314" stop-color="#3fecae"/><stop offset="0.319" stop-color="#000000"/><stop offset="0.918" stop-color="#000000"/><stop offset="0.923" stop-color="#62e785"/><stop offset="0.988" stop-color="#22dbb8"/><stop offset="0.998" stop-color="#0bd2cc"/></linearGradient><linearGradient id="s66"><stop offset="0.002" stop-color="#02c1f9"/><stop offset="0.206" stop-color="#0feadb"/><stop offset="0.308" stop-color="#39ecb2"/><stop offset="0.313" stop-color="#000000"/><stop offset="0.915" stop-color="#000000"/><stop offset="0.920" stop-color="#68e77f"/><stop offset="0.993" stop-color="#1ed9bb"/><stop offset="0.998" stop-color="#10d7c7"/></linearGradient><linearGradient id="s67"><stop offset="0.002" stop-color="#02bbf9"/><stop offset="0.217" stop-color="#0fe9da"/><stop offset="0.302" stop-color="#33ebb8"/><stop offset="0.307" stop-color="#000000"/><stop offset="0.907" stop-color="#000000"/><stop offset="0.912" stop-color="#6fe779"/><stop offset="0.993" stop-color="#29d9b1"/><stop offset="0.998" stop-color="#1fd7b9"/></linearGradient><linearGradient id="s68"><stop offset="0.002" stop-color="#02b4f8"/><stop offset="0.222" stop-color="#0fe8d9"/><stop offset="0.292" stop-color="#2deabd"/><stop offset="0.297" stop-color="#000000"/><stop offset="0.895" stop-color="#000000"/><stop offset="0.900" stop-color="#7ae86e"/><stop offset="0.998" stop-color="#23d7b4"/></linearGradient><linearGradient id="s69"><stop offset="0.002" stop-color="#02aef8"/><stop offset="0.225" stop-color="#0ee8da"/><stop offset="0.284" stop-color="#27e9c2"/><stop offset="0.289" stop-color="#000000"/><stop offset="0.880" stop-color="#000000"/><stop offset="0.884" stop-color="#83e967"/><stop offset="0.998" stop-color="#27d6af"/></linearGradient><linearGradient id="s70"><stop offset="0.002" stop-color="#02a7f7"/><stop offset="0.231" stop-color="#0ee7d9"/><stop offset="0.275" stop-color="#22e8c6"/><stop offset="0.280" stop-color="#000000"/><stop offset="0.857" stop-color="#000000"/><stop offset="0.861" stop-color="#89eb61"/><stop offset="0.993" stop-color="#32d6a4"/><stop offset="0.998" stop-color="#29d5ac"/></linearGradient><linearGradient id="s71"><stop offset="0.002" stop-color="#02a1f7"/><stop offset="0.232" stop-color="#0de6d9"/><stop offset="0.266" stop-color="#1de7cb"/><stop offset="0.270" stop-color="#000000"/><stop offset="0.832" stop-color="#000000"/><stop offset="0.836" stop-color="#8fec5d"/><stop offset="0.985" stop-color="#41d897"/><stop offset="0.998" stop-color="#2fd4a5"/></linearGradient><linearGradient id="s72"><stop offset="0.002" stop-color="#019bf6"/><stop offset="0.232" stop-color="#0ee6d7"/><stop offset="0.252" stop-color="#18e6ce"/><stop offset="0.256" stop-color="#000000"/><stop offset="0.797" stop-color="#000000"/><stop offset="0.801" stop-color="#93ed5a"/><stop offset="0.965" stop-color="#52db89"/><stop offset="0.998" stop-color="#36d39d"/></linearGradient><linearGradient id="s73"><stop offset="0.002" stop-color="#0195f6"/><stop offset="0.226" stop-color="#0ee5d7"/><stop offset="0.237" stop-color="#14e6d1"/><stop offset="0.241" stop-color="#000000"/><stop offset="0.751" stop-color="#000000"/><stop offset="0.755" stop-color="#97ee58"/><stop offset="0.940" stop-color="#5cdc80"/><stop offset="0.998" stop-color="#36d29c"/></linearGradient><linearGradient id="s74"><stop offset="0.002" stop-color="#018ff6"/><stop offset="0.221" stop-color="#0ee5d7"/><stop offset="0.228" stop-color="#11e5d4"/><stop offset="0.232" stop-color="#000000"/><stop offset="0.710" stop-color="#000000"/><stop offset="0.714" stop-color="#99ef56"/><stop offset="0.932" stop-color="#63dd7a"/><stop offset="0.998" stop-color="#4cd88c"/></linearGradient><linearGradient id="s75"><stop offset="0.002" stop-color="#0189f6"/><stop offset="0.228" stop-color="#0de4d7"/><stop offset="0.232" stop-color="#000000"/><stop offset="0.706" stop-color="#000000"/><stop offset="0.710" stop-color="#9bf056"/><stop offset="0.965" stop-color="#70e070"/><stop offset="0.998" stop-color="#64df7c"/></linearGradient><linearGradient id="s76"><stop offset="0.002" stop-color="#0183f5"/><stop offset="0.232" stop-color="#0be3d8"/><stop offset="0.235" stop-color="#000000"/><stop offset="0.706" stop-color="#000000"/><stop offset="0.710" stop-color="#9cf155"/><stop offset="0.987" stop-color="#7ce467"/><stop offset="0.998" stop-color="#79e46b"/></linearGradient><linearGradient id="s77"><stop offset="0.002" stop-color="#017df4"/><stop offset="0.229" stop-color="#09e2da"/><stop offset="0.233" stop-color="#000000"/><stop offset="0.701" stop-color="#000000"/><stop offset="0.705" stop-color="#9cf156"/><stop offset="0.987" stop-color="#89e75f"/><stop offset="0.998" stop-color="#86e762"/></linearGradient><linearGradient id="s78"><stop offset="0.002" stop-color="#0178f4"/><stop offset="0.101" stop-color="#009ae3"/><stop offset="0.104" stop-color="#5c8871"/><stop offset="0.152" stop-color="#5c8b70"/><stop offset="0.156" stop-color="#00b8e0"/><stop offset="0.233" stop-color="#08e2da"/><stop offset="0.236" stop-color="#000000"/><stop offset="0.698" stop-color="#000000"/><stop offset="0.701" stop-color="#9bf257"/><stop offset="0.984" stop-color="#92ea58"/><stop offset="0.998" stop-color="#8eea5c"/></linearGradient><linearGradient id="s79"><stop offset="0.002" stop-color="#0172f3"/><stop offset="0.086" stop-color="#008ee4"/><stop offset="0.090" stop-color="#5c8a72"/><stop offset="0.093" stop-color="#5c8972"/><stop offset="0.097" stop-color="#b87d00"/><stop offset="0.167" stop-color="#b85e00"/><stop offset="0.170" stop-color="#5c8d6f"/><stop offset="0.178" stop-color="#5c906f"/><stop offset="0.181" stop-color="#00c3df"/><stop offset="0.236" stop-color="#07e1da"/><stop offset="0.240" stop-color="#000000"/><stop offset="0.690" stop-color="#000000"/><stop offset="0.694" stop-color="#9af35a"/><stop offset="0.980" stop-color="#99ec52"/><stop offset="0.998" stop-color="#94ec58"/></linearGradient><linearGradient id="s80"><stop offset="0.002" stop-color="#016df2"/><stop offset="0.072" stop-color="#0084e4"/><stop offset="0.076" stop-color="#5c8e72"/><stop offset="0.079" stop-color="#5c8c72"/><stop offset="0.083" stop-color="#b88d00"/><stop offset="0.186" stop-color="#b85f00"/><stop offset="0.190" stop-color="#5c936f"/><stop offset="0.194" stop-color="#5c946f"/><stop offset="0.197" stop-color="#00ccde"/><stop offset="0.238" stop-color="#07e0d9"/><stop offset="0.242" stop-color="#000000"/><stop offset="0.688" stop-color="#000000"/><stop offset="0.692" stop-color="#98f35c"/><stop offset="0.976" stop-color="#a0ed4d"/><stop offset="0.998" stop-color="#9bee53"/></linearGradient><linearGradient id="s81"><stop offset="0.002" stop-color="#0168f2"/><stop offset="0.065" stop-color="#007ce5"/><stop offset="0.069" stop-color="#5c9172"/><stop offset="0.072" stop-color="#5c9072"/><stop offset="0.076" stop-color="#b89c00"/><stop offset="0.206" stop-color="#b96100"/><stop offset="0.209" stop-color="#5d996f"/><stop offset="0.213" stop-color="#5d9b6f"/><stop offset="0.217" stop-color="#00d5de"/><stop offset="0.246" stop-color="#09dfd7"/><stop offset="0.250" stop-color="#000000"/><stop offset="0.683" stop-color="#000000"/><stop offset="0.687" stop-color="#95f45f"/><stop offset="0.976" stop-color="#a4ed49"/><stop offset="0.998" stop-color="#a1ef4e"/></linearGradient><linearGradient id="s82"><stop offset="0.002" stop-color="#0162f1"/><stop offset="0.061" stop-color="#0075e5"/><stop offset="0.069" stop-color="#b8ac00"/><stop offset="0.225" stop-color="#bb6600"/><stop offset="0.232" stop-color="#00dcdd"/><stop offset="0.255" stop-color="#0cdfd3"/><stop offset="0.258" stop-color="#000000"/><stop offset="0.678" stop-color="#000000"/><stop offset="0.682" stop-color="#92f463"/><stop offset="0.976" stop-color="#a8ee46"/><stop offset="0.998" stop-color="#a5ef4b"/></linearGradient><linearGradient id="s83"><stop offset="0.002" stop-color="#015ef0"/><stop offset="0.054" stop-color="#006fe4"/><stop offset="0.062" stop-color="#b6b702"/><stop offset="0.227" stop-color="#bb6f00"/><stop offset="0.238" stop-color="#bc6a00"/><stop offset="0.245" stop-color="#08ddd5"/><stop offset="0.260" stop-color="#10dfce"/><stop offset="0.264" stop-color="#000000"/><stop offset="0.672" stop-color="#000000"/><stop offset="0.676" stop-color="#8ef467"/><stop offset="0.976" stop-color="#acee43"/><stop offset="0.998" stop-color="#a8ef47"/></linearGradient><linearGradient id="s84"><stop offset="0.002" stop-color="#0059ef"/><stop offset="0.051" stop-color="#0068e4"/><stop offset="0.058" stop-color="#a6b811"/><stop offset="0.182" stop-color="#b89d00"/><stop offset="0.254" stop-color="#be7000"/><stop offset="0.261" stop-color="#11ddcc"/><stop offset="0.276" stop-color="#18dfc7"/><stop offset="0.280" stop-color="#000000"/><stop offset="0.664" stop-color="#000000"/><stop offset="0.667" stop-color="#89f56d"/><stop offset="0.976" stop-color="#aeee40"/><stop offset="0.998" stop-color="#acef44"/></linearGradient><linearGradient id="s85"><stop offset="0.002" stop-color="#0053ee"/><stop offset="0.047" stop-color="#0062e4"/><stop offset="0.055" stop-color="#97b821"/><stop offset="0.203" stop-color="#baa500"/><stop offset="0.271" stop-color="#bf7600"/><stop offset="0.278" stop-color="#1adec3"/><stop offset="0.294" stop-color="#22e0bd"/><stop offset="0.297" stop-color="#000000"/><stop offset="0.661" stop-color="#000000"/><stop offset="0.665" stop-color="#83f573"/><stop offset="0.983" stop-color="#b1ed3d"/><stop offset="0.998" stop-color="#afee40"/></linearGradient><linearGradient id="s86"><stop offset="0.002" stop-color="#0050ed"/><stop offset="0.044" stop-color="#005ee3"/><stop offset="0.052" stop-color="#89b82f"/><stop offset="0.224" stop-color="#bdac00"/><stop offset="0.282" stop-color="#c17b00"/><stop offset="0.289" stop-color="#23debb"/><stop offset="0.320" stop-color="#2fe2b2"/><stop offset="0.324" stop-color="#000000"/><stop offset="0.649" stop-color="#000000"/><stop offset="0.653" stop-color="#79f57e"/><stop offset="0.983" stop-color="#b3ec3a"/><stop offset="0.998" stop-color="#b2ed3b"/></linearGradient><linearGradient id="s87"><stop offset="0.002" stop-color="#004bec"/><stop offset="0.041" stop-color="#0058e3"/><stop offset="0.048" stop-color="#74b843"/><stop offset="0.207" stop-color="#a8bc14"/><stop offset="0.264" stop-color="#c1a200"/><stop offset="0.299" stop-color="#c28200"/><stop offset="0.307" stop-color="#2edeb0"/><stop offset="0.353" stop-color="#3ce5a9"/><stop offset="0.357" stop-color="#000000"/><stop offset="0.639" stop-color="#000000"/><stop offset="0.643" stop-color="#70f687"/><stop offset="0.990" stop-color="#b5eb37"/><stop offset="0.998" stop-color="#b4ec38"/></linearGradient><linearGradient id="s88"><stop offset="0.002" stop-color="#0046eb"/><stop offset="0.041" stop-color="#0054e1"/><stop offset="0.045" stop-color="#56b862"/><stop offset="0.220" stop-color="#96bf29"/><stop offset="0.278" stop-color="#c3b100"/><stop offset="0.313" stop-color="#c38700"/><stop offset="0.321" stop-color="#38dea6"/><stop offset="0.395" stop-color="#47e9a2"/><stop offset="0.399" stop-color="#000000"/><stop offset="0.625" stop-color="#000000"/><stop offset="0.628" stop-color="#69f68f"/><stop offset="0.998" stop-color="#b6ea35"/></linearGradient><linearGradient id="s89"><stop offset="0.002" stop-color="#0043e9"/><stop offset="0.034" stop-color="#004ee1"/><stop offset="0.042" stop-color="#43b875"/><stop offset="0.208" stop-color="#64c05c"/><stop offset="0.294" stop-color="#c5bc00"/><stop offset="0.330" stop-color="#c58e00"/><stop offset="0.338" stop-color="#43de9b"/><stop offset="0.441" stop-color="#4eeda0"/><stop offset="0.445" stop-color="#000000"/><stop offset="0.603" stop-color="#000000"/><stop offset="0.607" stop-color="#61f696"/><stop offset="0.998" stop-color="#b7e831"/></linearGradient><linearGradient id="s90"><stop offset="0.002" stop-color="#003fe8"/><stop offset="0.034" stop-color="#004ae0"/><stop offset="0.042" stop-color="#32b885"/><stop offset="0.194" stop-color="#29c198"/><stop offset="0.198" stop-color="#000000"/><stop offset="0.290" stop-color="#000000"/><stop offset="0.294" stop-color="#9bca2f"/><stop offset="0.322" stop-color="#c7b900"/><stop offset="0.346" stop-color="#c69500"/><stop offset="0.354" stop-color="#50dd8d"/><stop offset="0.534" stop-color="#56f49f"/><stop offset="0.538" stop-color="#000000"/><stop offset="0.542" stop-color="#56f49f"/><stop offset="0.778" stop-color="#85f16c"/><stop offset="0.998" stop-color="#b8e62f"/></linearGradient><linearGradient id="s91"><stop offset="0.002" stop-color="#003ce5"/><stop offset="0.030" stop-color="#0047de"/><stop offset="0.035" stop-color="#1eb899"/><stop offset="0.161" stop-color="#0cbeb2"/><stop offset="0.165" stop-color="#000000"/><stop offset="0.327" stop-color="#000000"/><stop offset="0.331" stop-color="#bbcb10"/><stop offset="0.364" stop-color="#c89d00"/><stop offset="0.372" stop-color="#5edd80"/><stop offset="0.563" stop-color="#56f49f"/><stop offset="0.791" stop-color="#83f06e"/><stop offset="0.998" stop-color="#b7e42d"/></linearGradient><linearGradient id="s92"><stop offset="0.002" stop-color="#0038e4"/><stop offset="0.031" stop-color="#0043dd"/><stop offset="0.035" stop-color="#10b8a8"/><stop offset="0.141" stop-color="#00b2bd"/><stop offset="0.145" stop-color="#000000"/><stop offset="0.355" stop-color="#000000"/><stop offset="0.359" stop-color="#c2c90a"/><stop offset="0.379" stop-color="#c9a400"/><stop offset="0.387" stop-color="#72dc6a"/><stop offset="0.482" stop-color="#54ed9a"/><stop offset="0.727" stop-color="#68f38c"/><stop offset="0.998" stop-color="#b6e32c"/></linearGradient><linearGradient id="s93"><stop offset="0.002" stop-color="#0036e1"/><stop offset="0.027" stop-color="#0040db"/><stop offset="0.031" stop-color="#03b7b5"/><stop offset="0.119" stop-color="#00a2bb"/><stop offset="0.123" stop-color="#000000"/><stop offset="0.379" stop-color="#000000"/><stop offset="0.383" stop-color="#c4c70a"/><stop offset="0.395" stop-color="#caaa00"/><stop offset="0.400" stop-color="#a7c32b"/><stop offset="0.404" stop-color="#a5c62f"/><stop offset="0.408" stop-color="#80dc5c"/><stop offset="0.475" stop-color="#59ea92"/><stop offset="0.697" stop-color="#5ef598"/><stop offset="0.998" stop-color="#b4e12d"/></linearGradient><linearGradient id="s94"><stop offset="0.002" stop-color="#0033df"/><stop offset="0.023" stop-color="#003cda"/><stop offset="0.032" stop-color="#00abb8"/><stop offset="0.103" stop-color="#0092ba"/><stop offset="0.108" stop-color="#000000"/><stop offset="0.403" stop-color="#000000"/><stop offset="0.407" stop-color="#cdc100"/><stop offset="0.416" stop-color="#ccb400"/><stop offset="0.424" stop-color="#90db4a"/><stop offset="0.487" stop-color="#5de98d"/><stop offset="0.686" stop-color="#59f59d"/><stop offset="0.926" stop-color="#9de649"/><stop offset="0.998" stop-color="#b2df2e"/></linearGradient><linearGradient id="s95"><stop offset="0.002" stop-color="#0032dc"/><stop offset="0.019" stop-color="#003ad7"/><stop offset="0.028" stop-color="#009cb8"/><stop offset="0.084" stop-color="#0086b9"/><stop offset="0.088" stop-color="#000000"/><stop offset="0.423" stop-color="#000000"/><stop offset="0.427" stop-color="#cac505"/><stop offset="0.431" stop-color="#cdbb00"/><stop offset="0.448" stop-color="#90dd4d"/><stop offset="0.513" stop-color="#5deb8e"/><stop offset="0.706" stop-color="#58f49d"/><stop offset="0.933" stop-color="#9ae54a"/><stop offset="0.998" stop-color="#afde2f"/></linearGradient><linearGradient id="s96"><stop offset="0.002" stop-color="#0030d9"/><stop offset="0.020" stop-color="#0039d4"/><stop offset="0.028" stop-color="#008db8"/><stop offset="0.072" stop-color="#0077ba"/><stop offset="0.076" stop-color="#000000"/><stop offset="0.446" stop-color="#000000"/><stop offset="0.450" stop-color="#ccca04"/><stop offset="0.454" stop-color="#cfc400"/><stop offset="0.467" stop-color="#9cdb3f"/><stop offset="0.533" stop-color="#5feb8c"/><stop offset="0.711" stop-color="#56f49f"/><stop offset="0.898" stop-color="#89e85f"/><stop offset="0.998" stop-color="#abdd32"/></linearGradient><linearGradient id="s97"><stop offset="0.002" stop-color="#0031d5"/><stop offset="0.015" stop-color="#0038d0"/><stop offset="0.020" stop-color="#007bb8"/><stop offset="0.051" stop-color="#006eb9"/><stop offset="0.055" stop-color="#000000"/><stop offset="0.467" stop-color="#000000"/><stop offset="0.471" stop-color="#cdce04"/><stop offset="0.502" stop-color="#8be056"/><stop offset="0.569" stop-color="#5bed92"/><stop offset="0.759" stop-color="#58f29b"/><stop offset="0.976" stop-color="#a0df3f"/><stop offset="0.998" stop-color="#a7dc35"/></linearGradient><linearGradient id="s98"><stop offset="0.002" stop-color="#0033cf"/><stop offset="0.011" stop-color="#004dc2"/><stop offset="0.016" stop-color="#006cb8"/><stop offset="0.034" stop-color="#0062b9"/><stop offset="0.038" stop-color="#000000"/><stop offset="0.489" stop-color="#000000"/><stop offset="0.493" stop-color="#ced204"/><stop offset="0.525" stop-color="#8be156"/><stop offset="0.597" stop-color="#59ee95"/><stop offset="0.786" stop-color="#58f199"/><stop offset="0.998" stop-color="#a2dc39"/></linearGradient><linearGradient id="s99"><stop offset="0.002" stop-color="#003ec5"/><stop offset="0.016" stop-color="#0056ba"/><stop offset="0.021" stop-color="#000000"/><stop offset="0.511" stop-color="#000000"/><stop offset="0.516" stop-color="#c7d40d"/><stop offset="0.553" stop-color="#86e35d"/><stop offset="0.622" stop-color="#59ee96"/><stop offset="0.805" stop-color="#58f099"/><stop offset="0.998" stop-color="#9ddb3e"/></linearGradient><linearGradient id="s100"><stop offset="0.005" stop-color="#c0d616"/><stop offset="0.126" stop-color="#71e777"/><stop offset="0.369" stop-color="#50f2a2"/><stop offset="0.793" stop-color="#6de87c"/><stop offset="0.995" stop-color="#98dc44"/></linearGradient><linearGradient id="s101"><stop offset="0.005" stop-color="#b9d71f"/><stop offset="0.158" stop-color="#67e982"/><stop offset="0.473" stop-color="#50f1a2"/><stop offset="0.842" stop-color="#74e571"/><stop offset="0.995" stop-color="#92dc49"/></linearGradient><linearGradient id="s102"><stop offset="0.006" stop-color="#b1d928"/><stop offset="0.194" stop-color="#61eb8b"/><stop offset="0.571" stop-color="#52ee9d"/><stop offset="0.924" stop-color="#80e060"/><stop offset="0.994" stop-color="#8ddc4f"/></linearGradient><linearGradient id="s103"><stop offset="0.006" stop-color="#a9db32"/><stop offset="0.224" stop-color="#5eeb8e"/><stop offset="0.635" stop-color="#54ec98"/><stop offset="0.994" stop-color="#86dd57"/></linearGradient><linearGradient id="s104"><stop offset="0.007" stop-color="#a0dd3d"/><stop offset="0.236" stop-color="#5deb8e"/><stop offset="0.679" stop-color="#56ea94"/><stop offset="0.993" stop-color="#7fde5e"/></linearGradient><linearGradient id="s105"><stop offset="0.008" stop-color="#96df4a"/><stop offset="0.270" stop-color="#5beb90"/><stop offset="0.779" stop-color="#5ce68b"/><stop offset="0.992" stop-color="#76df68"/></linearGradient><linearGradient id="s106"><stop offset="0.010" stop-color="#8ae258"/><stop offset="0.330" stop-color="#59ea92"/><stop offset="0.910" stop-color="#63e380"/><stop offset="0.990" stop-color="#69e077"/></linearGradient><linearGradient id="s107"><stop offset="0.013" stop-color="#7be469"/><stop offset="0.487" stop-color="#57e992"/><stop offset="0.987" stop-color="#61e281"/></linearGradient><linearGradient id="s108"><stop offset="0.025" stop-color="#66e680"/><stop offset="0.975" stop-color="#5be58a"/></linearGradient></defs><rect x="130" y="12" width="19" height="2" fill="url(#s1)"/><rect x="125" y="14" width="29" height="2" fill="url(#s2)"/><rect x="121" y="16" width="37" height="2" fill="url(#s3)"/><rect x="118" y="18" width="43" height="2" fill="url(#s4)"/><rect x="115" y="20" width="49" height="2" fill="url(#s5)"/><rect x="113" y="22" width="53" height="2" fill="url(#s6)"/><rect x="110" y="24" width="58" height="2" fill="url(#s7)"/><rect x="108" y="26" width="62" height="2" fill="url(#s8)"/><rect x="106" y="28" width="66" height="2" fill="url(#s9)"/><rect x="104" y="30" width="70" height="2" fill="url(#s10)"/><rect x="102" y="32" width="74" height="2" fill="url(#s11)"/><rect x="101" y="34" width="77" height="2" fill="url(#s12)"/><rect x="99" y="36" width="80" height="2" fill="url(#s13)"/><rect x="97" y="38" width="84" height="2" fill="url(#s14)"/><rect x="96" y="40" width="86" height="2" fill="url(#s15)"/><rect x="94" y="42" width="90" height="2" fill="url(#s16)"/><rect x="93" y="44" width="92" height="2" fill="url(#s17)"/><rect x="91" y="46" width="96" height="2" fill="url(#s18)"/><rect x="89" y="48" width="99" height="2" fill="url(#s19)"/><rect x="88" y="50" width="101" height="2" fill="url(#s20)"/><rect x="87" y="52" width="104" height="2" fill="url(#s21)"/><rect x="85" y="54" width="107" height="2" fill="url(#s22)"/><rect x="84" y="56" width="109" height="2" fill="url(#s23)"/><rect x="83" y="58" width="111" height="2" fill="url(#s24)"/><rect x="81" y="60" width="115" height="2" fill="url(#s25)"/><rect x="80" y="62" width="117" height="2" fill="url(#s26)"/><rect x="79" y="64" width="119" height="2" fill="url(#s27)"/><rect x="78" y="66" width="121" height="2" fill="url(#s28)"/><rect x="77" y="68" width="123" height="2" fill="url(#s29)"/><rect x="75" y="70" width="127" height="2" fill="url(#s30)"/><rect x="74" y="72" width="129" height="2" fill="url(#s31)"/><rect x="73" y="74" width="131" height="2" fill="url(#s32)"/><rect x="72" y="76" width="133" height="2" fill="url(#s33)"/><rect x="71" y="78" width="135" height="2" fill="url(#s34)"/><rect x="70" y="80" width="137" height="2" fill="url(#s35)"/><rect x="68" y="82" width="140" height="2" fill="url(#s36)"/><rect x="67" y="84" width="142" height="2" fill="url(#s37)"/><rect x="66" y="86" width="145" height="2" fill="url(#s38)"/><rect x="65" y="88" width="147" height="2" fill="url(#s39)"/><rect x="64" y="90" width="149" height="2" fill="url(#s40)"/><rect x="63" y="92" width="151" height="2" fill="url(#s41)"/><rect x="62" y="94" width="153" height="2" fill="url(#s42)"/><rect x="61" y="96" width="155" height="2" fill="url(#s43)"/><rect x="60" y="98" width="157" height="2" fill="url(#s44)"/><rect x="59" y="100" width="159" height="2" fill="url(#s45)"/><rect x="58" y="102" width="161" height="2" fill="url(#s46)"/><rect x="57" y="104" width="163" height="2" fill="url(#s47)"/><rect x="56" y="106" width="165" height="2" fill="url(#s48)"/><rect x="55" y="108" width="167" height="2" fill="url(#s49)"/><rect x="54" y="110" width="169" height="2" fill="url(#s50)"/><rect x="53" y="112" width="171" height="2" fill="url(#s51)"/><rect x="52" y="114" width="174" height="2" fill="url(#s52)"/><rect x="51" y="116" width="176" height="2" fill="url(#s53)"/><rect x="50" y="118" width="178" height="2" fill="url(#s54)"/><rect x="49" y="120" width="180" height="2" fill="url(#s55)"/><rect x="48" y="122" width="182" height="2" fill="url(#s56)"/><rect x="47" y="124" width="184" height="2" fill="url(#s57)"/><rect x="46" y="126" width="186" height="2" fill="url(#s58)"/><rect x="45" y="128" width="189" height="2" fill="url(#s59)"/><rect x="44" y="130" width="191" height="2" fill="url(#s60)"/><rect x="44" y="132" width="192" height="2" fill="url(#s61)"/><rect x="43" y="134" width="194" height="2" fill="url(#s62)"/><rect x="42" y="136" width="196" height="2" fill="url(#s63)"/><rect x="41" y="138" width="198" height="2" fill="url(#s64)"/><rect x="40" y="140" width="202" height="2" fill="url(#s65)"/><rect x="39" y="142" width="206" height="2" fill="url(#s66)"/><rect x="38" y="144" width="210" height="2" fill="url(#s67)"/><rect x="38" y="146" width="214" height="2" fill="url(#s68)"/><rect x="37" y="148" width="220" height="2" fill="url(#s69)"/><rect x="36" y="150" width="227" height="2" fill="url(#s70)"/><rect x="35" y="152" width="235" height="2" fill="url(#s71)"/><rect x="35" y="154" width="244" height="2" fill="url(#s72)"/><rect x="34" y="156" width="259" height="2" fill="url(#s73)"/><rect x="33" y="158" width="274" height="2" fill="url(#s74)"/><rect x="32" y="160" width="274" height="2" fill="url(#s75)"/><rect x="31" y="162" width="274" height="2" fill="url(#s76)"/><rect x="31" y="164" width="273" height="2" fill="url(#s77)"/><rect x="30" y="166" width="273" height="2" fill="url(#s78)"/><rect x="29" y="168" width="273" height="2" fill="url(#s79)"/><rect x="29" y="170" width="271" height="2" fill="url(#s80)"/><rect x="28" y="172" width="270" height="2" fill="url(#s81)"/><rect x="27" y="174" width="269" height="2" fill="url(#s82)"/><rect x="27" y="176" width="267" height="2" fill="url(#s83)"/><rect x="26" y="178" width="266" height="2" fill="url(#s84)"/><rect x="25" y="180" width="264" height="2" fill="url(#s85)"/><rect x="25" y="182" width="261" height="2" fill="url(#s86)"/><rect x="24" y="184" width="259" height="2" fill="url(#s87)"/><rect x="23" y="186" width="257" height="2" fill="url(#s88)"/><rect x="23" y="188" width="253" height="2" fill="url(#s89)"/><rect x="22" y="190" width="250" height="2" fill="url(#s90)"/><rect x="22" y="192" width="246" height="2" fill="url(#s91)"/><rect x="21" y="194" width="244" height="2" fill="url(#s92)"/><rect x="21" y="196" width="239" height="2" fill="url(#s93)"/><rect x="20" y="198" width="237" height="2" fill="url(#s94)"/><rect x="20" y="200" width="233" height="2" fill="url(#s95)"/><rect x="19" y="202" width="230" height="2" fill="url(#s96)"/><rect x="19" y="204" width="226" height="2" fill="url(#s97)"/><rect x="19" y="206" width="222" height="2" fill="url(#s98)"/><rect x="19" y="208" width="218" height="2" fill="url(#s99)"/><rect x="134" y="210" width="99" height="2" fill="url(#s100)"/><rect x="137" y="212" width="92" height="2" fill="url(#s101)"/><rect x="140" y="214" width="85" height="2" fill="url(#s102)"/><rect x="143" y="216" width="78" height="2" fill="url(#s103)"/><rect x="147" y="218" width="70" height="2" fill="url(#s104)"/><rect x="151" y="220" width="61" height="2" fill="url(#s105)"/><rect x="156" y="222" width="50" height="2" fill="url(#s106)"/><rect x="162" y="224" width="38" height="2" fill="url(#s107)"/><rect x="170" y="226" width="20" height="2" fill="url(#s108)"/></svg><div class="a" style="left:543.5px;top:177px;width:28.5px;height:383px;background:#8a8a8a"></div><div class="a" style="left:544.5px;top:178px;width:27.5px;height:382px;background:linear-gradient(#f00,#ff0 33.33%,#0ff 66.67%,#00f)"></div><div class="a t " style="left:408.0px;width:300px;text-align:center;top:159.27px;font-size:13.5px;color:#101020;transform:scaleX(0.9)">1.693</div><div class="a t " style="left:408.0px;width:300px;text-align:center;top:565.57px;font-size:13.5px;color:#101020;transform:scaleX(0.9)">–1.658</div><div class="a t " style="left:408.0px;width:300px;text-align:center;top:585.84px;font-size:12px;color:#303040;transform:scaleX(0.95)">wv</div><div class="a" style="left:1140px;top:176.5px;width:28px;height:323.5px;background:#8a8a8a"></div><div class="a" style="left:1141px;top:177.5px;width:27px;height:322.5px;background:linear-gradient(#f00,#ff0 33.33%,#0ff 66.67%,#00f)"></div><div class="a t " style="left:1004.5px;width:300px;text-align:center;top:159.37px;font-size:13.5px;color:#101020;transform:scaleX(0.9)">1.693</div><div class="a t " style="left:1004.5px;width:300px;text-align:center;top:505.27px;font-size:13.5px;color:#101020;transform:scaleX(0.9)">–1.658</div><div class="a t " style="left:1004.5px;width:300px;text-align:center;top:525.44px;font-size:12px;color:#303040;transform:scaleX(0.95)">wv</div><div class="a" style="left:1151px;top:552px;width:3px;height:99px;background:#8a8a8a;border-right:1px solid #fff;border-bottom:1px solid #fff"></div><div class="a" style="left:1143px;top:608px;width:20px;height:10px;background:linear-gradient(#f4f4f4,#dcdcdc);border:1px solid #8a8a8a;border-radius:1px"></div><div class="a" style="left:1214.5px;top:153.5px;width:396.5px;height:528.5px;background:#f0f0f0;border-top:3px solid #7c7c7c;border-left:2.5px solid #7c7c7c;border-bottom:2px solid #fff;border-right:2px solid #fff"></div><div class="a" style="left:1217px;top:156.0px;width:388px;height:28.30000000000001px;background:#f0f0f0"></div><div class="a" style="left:1217px;top:182.8px;width:389px;height:1.5px;background:#1a1a1a"></div><div class="a" style="left:1250.5px;top:156.0px;width:1.5px;height:28.30000000000001px;background:#000"></div><div class="a" style="left:1368.5px;top:156.0px;width:1.5px;height:28.30000000000001px;background:#000"></div><div class="a" style="left:1604.5px;top:156.0px;width:1.5px;height:28.30000000000001px;background:#000"></div><div class="a" style="left:1217px;top:184.3px;width:388px;height:494.06px;background:#fff"></div><div class="a dh" style="left:1217px;top:206.41px;width:389px;height:1.5px"></div><div class="a dh" style="left:1217px;top:229.97px;width:389px;height:1.5px"></div><div class="a dh" style="left:1217px;top:253.53px;width:389px;height:1.5px"></div><div class="a dh" style="left:1217px;top:277.09px;width:389px;height:1.5px"></div><div class="a dh" style="left:1217px;top:300.65px;width:389px;height:1.5px"></div><div class="a dh" style="left:1217px;top:324.21px;width:389px;height:1.5px"></div><div class="a dh" style="left:1217px;top:347.77px;width:389px;height:1.5px"></div><div class="a dh" style="left:1217px;top:371.33px;width:389px;height:1.5px"></div><div class="a dh" style="left:1217px;top:394.89px;width:389px;height:1.5px"></div><div class="a dh" style="left:1217px;top:418.45px;width:389px;height:1.5px"></div><div class="a dh" style="left:1217px;top:442.01px;width:389px;height:1.5px"></div><div class="a dh" style="left:1217px;top:465.57px;width:389px;height:1.5px"></div><div class="a dh" style="left:1217px;top:489.13px;width:389px;height:1.5px"></div><div class="a dh" style="left:1217px;top:512.69px;width:389px;height:1.5px"></div><div class="a dh" style="left:1217px;top:536.25px;width:389px;height:1.5px"></div><div class="a dh" style="left:1217px;top:559.81px;width:389px;height:1.5px"></div><div class="a dh" style="left:1217px;top:583.37px;width:389px;height:1.5px"></div><div class="a dh" style="left:1217px;top:606.93px;width:389px;height:1.5px"></div><div class="a dh" style="left:1217px;top:630.49px;width:389px;height:1.5px"></div><div class="a dh" style="left:1217px;top:654.05px;width:389px;height:1.5px"></div><div class="a dh" style="left:1217px;top:677.61px;width:389px;height:1.5px"></div><div class="a dv" style="left:1250.5px;top:184.3px;width:1.5px;height:494.06px"></div><div class="a dv" style="left:1368.5px;top:184.3px;width:1.5px;height:494.06px"></div><div class="a dv" style="left:1604.5px;top:184.3px;width:1.5px;height:494.06px"></div><div class="a t" style="left:1134.5px;width:200px;text-align:center;top:162.42px;font-size:15.8px;color:#111;">j</div><div class="a t" style="left:1211.0px;width:200px;text-align:center;top:162.42px;font-size:15.8px;color:#111;">Value</div><div class="a t" style="left:1376.5px;top:162.42px;font-size:15.8px;color:#111;">Representation</div><div class="a t" style="left:1134.5px;width:200px;text-align:center;top:187.52px;font-size:15.8px;color:#111;">1</div><div class="a t" style="left:1211.0px;width:200px;text-align:center;top:187.52px;font-size:15.8px;color:#111;">0.0661</div><div class="a t" style="left:1376.5px;top:187.52px;font-size:15.8px;color:#111;">1</div><div class="a t" style="left:1134.5px;width:200px;text-align:center;top:211.08px;font-size:15.8px;color:#111;">2</div><div class="a t" style="left:1211.0px;width:200px;text-align:center;top:211.08px;font-size:15.8px;color:#111;">-0.4903</div><div class="a t" style="left:1376.5px;top:211.08px;font-size:15.8px;color:#111;">R cos(A)</div><div class="a t" style="left:1134.5px;width:200px;text-align:center;top:234.64px;font-size:15.8px;color:#111;">3</div><div class="a t" style="left:1211.0px;width:200px;text-align:center;top:234.64px;font-size:15.8px;color:#111;">-0.3583</div><div class="a t" style="left:1376.5px;top:234.64px;font-size:15.8px;color:#111;">R sin(A)</div><div class="a t" style="left:1134.5px;width:200px;text-align:center;top:258.20px;font-size:15.8px;color:#111;">4</div><div class="a t" style="left:1211.0px;width:200px;text-align:center;top:258.20px;font-size:15.8px;color:#111;">-1.6804</div><div class="a t" style="left:1376.5px;top:258.20px;font-size:15.8px;color:#111;">R^2 cos(2A)</div><div class="a t" style="left:1134.5px;width:200px;text-align:center;top:281.76px;font-size:15.8px;color:#111;">5</div><div class="a t" style="left:1211.0px;width:200px;text-align:center;top:281.76px;font-size:15.8px;color:#111;">0.0420</div><div class="a t" style="left:1376.5px;top:281.76px;font-size:15.8px;color:#111;">2R^2 - 1</div><div class="a t" style="left:1134.5px;width:200px;text-align:center;top:305.32px;font-size:15.8px;color:#111;">6</div><div class="a t" style="left:1211.0px;width:200px;text-align:center;top:305.32px;font-size:15.8px;color:#111;">-0.6491</div><div class="a t" style="left:1376.5px;top:305.32px;font-size:15.8px;color:#111;">R^2 sin(2A)</div><div class="a t" style="left:1134.5px;width:200px;text-align:center;top:328.88px;font-size:15.8px;color:#111;">7</div><div class="a t" style="left:1211.0px;width:200px;text-align:center;top:328.88px;font-size:15.8px;color:#111;">1.5874</div><div class="a t" style="left:1376.5px;top:328.88px;font-size:15.8px;color:#111;">R^3 cos(3A)</div><div class="a t" style="left:1134.5px;width:200px;text-align:center;top:352.44px;font-size:15.8px;color:#111;">8</div><div class="a t" style="left:1211.0px;width:200px;text-align:center;top:352.44px;font-size:15.8px;color:#111;">-0.4657</div><div class="a t" style="left:1376.5px;top:352.44px;font-size:15.8px;color:#111;">(3R^3 - 2 R) cos(A)</div><div class="a t" style="left:1134.5px;width:200px;text-align:center;top:376.00px;font-size:15.8px;color:#111;">9</div><div class="a t" style="left:1211.0px;width:200px;text-align:center;top:376.00px;font-size:15.8px;color:#111;">-0.4152</div><div class="a t" style="left:1376.5px;top:376.00px;font-size:15.8px;color:#111;">(3R^3 - 2 R) sin(A)</div><div class="a t" style="left:1134.5px;width:200px;text-align:center;top:399.56px;font-size:15.8px;color:#111;">10</div><div class="a t" style="left:1211.0px;width:200px;text-align:center;top:399.56px;font-size:15.8px;color:#111;">-1.6119</div><div class="a t" style="left:1376.5px;top:399.56px;font-size:15.8px;color:#111;">R^3 sin(3A)</div><div class="a t" style="left:1134.5px;width:200px;text-align:center;top:423.12px;font-size:15.8px;color:#111;">11</div><div class="a t" style="left:1211.0px;width:200px;text-align:center;top:423.12px;font-size:15.8px;color:#111;">0.1336</div><div class="a t" style="left:1376.5px;top:423.12px;font-size:15.8px;color:#111;">R^4 cos(4A)</div><div class="a t" style="left:1134.5px;width:200px;text-align:center;top:446.68px;font-size:15.8px;color:#111;">12</div><div class="a t" style="left:1211.0px;width:200px;text-align:center;top:446.68px;font-size:15.8px;color:#111;">-0.0442</div><div class="a t" style="left:1376.5px;top:446.68px;font-size:15.8px;color:#111;">(4R^4 - 3 R^2) cos(2A)</div><div class="a t" style="left:1134.5px;width:200px;text-align:center;top:470.24px;font-size:15.8px;color:#111;">13</div><div class="a t" style="left:1211.0px;width:200px;text-align:center;top:470.24px;font-size:15.8px;color:#111;">0.1633</div><div class="a t" style="left:1376.5px;top:470.24px;font-size:15.8px;color:#111;">6R^4 - 6 R^2 + 1</div><div class="a t" style="left:1134.5px;width:200px;text-align:center;top:493.80px;font-size:15.8px;color:#111;">14</div><div class="a t" style="left:1211.0px;width:200px;text-align:center;top:493.80px;font-size:15.8px;color:#111;">0.0350</div><div class="a t" style="left:1376.5px;top:493.80px;font-size:15.8px;color:#111;">(4R^4 - 3 R^2) sin(2A)</div><div class="a t" style="left:1134.5px;width:200px;text-align:center;top:517.36px;font-size:15.8px;color:#111;">15</div><div class="a t" style="left:1211.0px;width:200px;text-align:center;top:517.36px;font-size:15.8px;color:#111;">0.1572</div><div class="a t" style="left:1376.5px;top:517.36px;font-size:15.8px;color:#111;">R^4 sin(4A)</div><div class="a t" style="left:1134.5px;width:200px;text-align:center;top:540.92px;font-size:15.8px;color:#111;">16</div><div class="a t" style="left:1211.0px;width:200px;text-align:center;top:540.92px;font-size:15.8px;color:#111;">0.1873</div><div class="a t" style="left:1376.5px;top:540.92px;font-size:15.8px;color:#111;">R^5 cos(5A)</div><div class="a t" style="left:1134.5px;width:200px;text-align:center;top:564.48px;font-size:15.8px;color:#111;">17</div><div class="a t" style="left:1211.0px;width:200px;text-align:center;top:564.48px;font-size:15.8px;color:#111;">-0.0017</div><div class="a t" style="left:1376.5px;top:564.48px;font-size:15.8px;color:#111;">(5R^5 - 4 R^3) cos(3A)</div><div class="a t" style="left:1134.5px;width:200px;text-align:center;top:588.04px;font-size:15.8px;color:#111;">18</div><div class="a t" style="left:1211.0px;width:200px;text-align:center;top:588.04px;font-size:15.8px;color:#111;">-0.0464</div><div class="a t" style="left:1376.5px;top:588.04px;font-size:15.8px;color:#111;">(10R^5 - 12 R^3 + 3 R) cos(A)</div><div class="a t" style="left:1134.5px;width:200px;text-align:center;top:611.60px;font-size:15.8px;color:#111;">19</div><div class="a t" style="left:1211.0px;width:200px;text-align:center;top:611.60px;font-size:15.8px;color:#111;">0.0167</div><div class="a t" style="left:1376.5px;top:611.60px;font-size:15.8px;color:#111;">(10R^5 - 12 R^3 + 3 R) sin(A)</div><div class="a t" style="left:1134.5px;width:200px;text-align:center;top:635.16px;font-size:15.8px;color:#111;">20</div><div class="a t" style="left:1211.0px;width:200px;text-align:center;top:635.16px;font-size:15.8px;color:#111;">0.0754</div><div class="a t" style="left:1376.5px;top:635.16px;font-size:15.8px;color:#111;">(5R^5 - 4 R^3) sin(3A)</div><div class="a t" style="left:1134.5px;width:200px;text-align:center;top:658.72px;font-size:15.8px;color:#111;">21</div><div class="a t" style="left:1211.0px;width:200px;text-align:center;top:658.72px;font-size:15.8px;color:#111;">0.5094</div><div class="a t" style="left:1376.5px;top:658.72px;font-size:15.8px;color:#111;">R^5 sin(5A)</div><div class="a" style="left:20.5px;top:726.5px;width:452.5px;height:158.5px;background:#f0f0f0;border-top:3px solid #7c7c7c;border-left:2.5px solid #7c7c7c;border-bottom:2px solid #fff;border-right:2px solid #fff"></div><div class="a" style="left:23px;top:729.0px;width:440.8px;height:26.5px;background:#f0f0f0"></div><div class="a" style="left:23px;top:754.0px;width:441.8px;height:1.5px;background:#1a1a1a"></div><div class="a" style="left:139.1px;top:729.0px;width:1.5px;height:26.5px;background:#000"></div><div class="a" style="left:256.5px;top:729.0px;width:1.5px;height:26.5px;background:#000"></div><div class="a" style="left:345.2px;top:729.0px;width:1.5px;height:26.5px;background:#000"></div><div class="a" style="left:463.3px;top:729.0px;width:1.5px;height:26.5px;background:#000"></div><div class="a" style="left:23px;top:755.5px;width:440.8px;height:117.89999999999998px;background:#fff"></div><div class="a dh" style="left:23px;top:778.45px;width:441.8px;height:1.5px"></div><div class="a dh" style="left:23px;top:801.95px;width:441.8px;height:1.5px"></div><div class="a dh" style="left:23px;top:825.45px;width:441.8px;height:1.5px"></div><div class="a dh" style="left:23px;top:848.95px;width:441.8px;height:1.5px"></div><div class="a dh" style="left:23px;top:872.65px;width:441.8px;height:1.5px"></div><div class="a dv" style="left:139.1px;top:755.5px;width:1.5px;height:117.90px"></div><div class="a dv" style="left:256.5px;top:755.5px;width:1.5px;height:117.90px"></div><div class="a dv" style="left:345.2px;top:755.5px;width:1.5px;height:117.90px"></div><div class="a dv" style="left:463.3px;top:755.5px;width:1.5px;height:117.90px"></div><div class="a t" style="left:-18.0px;width:200px;text-align:center;top:735.22px;font-size:15.8px;color:#111;">Name</div><div class="a t" style="left:100.5px;width:200px;text-align:center;top:735.22px;font-size:15.8px;color:#111;">Value</div><div class="a t" style="left:203.5px;width:200px;text-align:center;top:735.22px;font-size:15.8px;color:#111;">Angle</div><div class="a t" style="left:306.0px;width:200px;text-align:center;top:735.22px;font-size:15.8px;color:#111;">RMS</div><div class="a t" style="left:28.2px;top:760.12px;font-size:15.8px;color:#111;">Tilt</div><div class="a t" style="left:100.5px;width:200px;text-align:center;top:760.12px;font-size:15.8px;color:#111;">0.6167</div><div class="a t" style="left:203.5px;width:200px;text-align:center;top:760.12px;font-size:15.8px;color:#111;">55.20</div><div class="a t" style="left:306.0px;width:200px;text-align:center;top:760.12px;font-size:15.8px;color:#111;">0.3084</div><div class="a t" style="left:28.2px;top:783.82px;font-size:15.8px;color:#111;">Power</div><div class="a t" style="left:100.5px;width:200px;text-align:center;top:783.82px;font-size:15.8px;color:#111;">-2.7332</div><div class="a t" style="left:306.0px;width:200px;text-align:center;top:783.82px;font-size:15.8px;color:#111;">0.7890</div><div class="a t" style="left:28.2px;top:807.32px;font-size:15.8px;color:#111;">Astigmatism</div><div class="a t" style="left:100.5px;width:200px;text-align:center;top:807.32px;font-size:15.8px;color:#111;">3.6412</div><div class="a t" style="left:203.5px;width:200px;text-align:center;top:807.32px;font-size:15.8px;color:#111;">-78.70</div><div class="a t" style="left:306.0px;width:200px;text-align:center;top:807.32px;font-size:15.8px;color:#111;">0.9103</div><div class="a t" style="left:28.2px;top:830.82px;font-size:15.8px;color:#111;">Coma</div><div class="a t" style="left:100.5px;width:200px;text-align:center;top:830.82px;font-size:15.8px;color:#111;">1.7731</div><div class="a t" style="left:203.5px;width:200px;text-align:center;top:830.82px;font-size:15.8px;color:#111;">-131.05</div><div class="a t" style="left:306.0px;width:200px;text-align:center;top:830.82px;font-size:15.8px;color:#111;">0.6269</div><div class="a t" style="left:28.2px;top:854.32px;font-size:15.8px;color:#111;">Spherical</div><div class="a t" style="left:100.5px;width:200px;text-align:center;top:854.32px;font-size:15.8px;color:#111;">1.0097</div><div class="a t" style="left:306.0px;width:200px;text-align:center;top:854.32px;font-size:15.8px;color:#111;">0.3010</div><div class="a" style="left:497.5px;top:726.7px;width:502.5px;height:158.29999999999995px;background:#f0f0f0;border-top:3px solid #7c7c7c;border-left:2.5px solid #7c7c7c;border-bottom:2px solid #fff;border-right:2px solid #fff"></div><div class="a" style="left:500px;top:729.2px;width:493.5px;height:26.299999999999955px;background:#f0f0f0"></div><div class="a" style="left:500px;top:754.0px;width:494.5px;height:1.5px;background:#1a1a1a"></div><div class="a" style="left:551.5px;top:729.2px;width:1.5px;height:26.299999999999955px;background:#000"></div><div class="a" style="left:669.3px;top:729.2px;width:1.5px;height:26.299999999999955px;background:#000"></div><div class="a" style="left:786.5px;top:729.2px;width:1.5px;height:26.299999999999955px;background:#000"></div><div class="a" style="left:874.9px;top:729.2px;width:1.5px;height:26.299999999999955px;background:#000"></div><div class="a" style="left:993.0px;top:729.2px;width:1.5px;height:26.299999999999955px;background:#000"></div><div class="a" style="left:500px;top:755.5px;width:493.5px;height:117.89999999999998px;background:#fff"></div><div class="a dh" style="left:500px;top:778.45px;width:494.5px;height:1.5px"></div><div class="a dh" style="left:500px;top:801.95px;width:494.5px;height:1.5px"></div><div class="a dh" style="left:500px;top:825.45px;width:494.5px;height:1.5px"></div><div class="a dh" style="left:500px;top:848.95px;width:494.5px;height:1.5px"></div><div class="a dh" style="left:500px;top:872.65px;width:494.5px;height:1.5px"></div><div class="a dv" style="left:551.5px;top:755.5px;width:1.5px;height:117.90px"></div><div class="a dv" style="left:669.3px;top:755.5px;width:1.5px;height:117.90px"></div><div class="a dv" style="left:786.5px;top:755.5px;width:1.5px;height:117.90px"></div><div class="a dv" style="left:874.9px;top:755.5px;width:1.5px;height:117.90px"></div><div class="a dv" style="left:993.0px;top:755.5px;width:1.5px;height:117.90px"></div><div class="a t" style="left:512.0px;width:200px;text-align:center;top:735.22px;font-size:15.8px;color:#111;">Name</div><div class="a t" style="left:630.5px;width:200px;text-align:center;top:735.22px;font-size:15.8px;color:#111;">Value</div><div class="a t" style="left:734.0px;width:200px;text-align:center;top:735.22px;font-size:15.8px;color:#111;">Angle</div><div class="a t" style="left:836.0px;width:200px;text-align:center;top:735.22px;font-size:15.8px;color:#111;">RMS</div><div class="a t" style="left:558.2px;top:760.12px;font-size:15.8px;color:#111;">Tilt</div><div class="a t" style="left:630.5px;width:200px;text-align:center;top:760.12px;font-size:15.8px;color:#111;">1.1459</div><div class="a t" style="left:734.0px;width:200px;text-align:center;top:760.12px;font-size:15.8px;color:#111;">-137.78</div><div class="a t" style="left:836.0px;width:200px;text-align:center;top:760.12px;font-size:15.8px;color:#111;">0.2865</div><div class="a t" style="left:558.2px;top:783.82px;font-size:15.8px;color:#111;">Power</div><div class="a t" style="left:630.5px;width:200px;text-align:center;top:783.82px;font-size:15.8px;color:#111;">0.0972</div><div class="a t" style="left:836.0px;width:200px;text-align:center;top:783.82px;font-size:15.8px;color:#111;">0.0280</div><div class="a t" style="left:558.2px;top:807.32px;font-size:15.8px;color:#111;">Astigmatism</div><div class="a t" style="left:630.5px;width:200px;text-align:center;top:807.32px;font-size:15.8px;color:#111;">3.6412</div><div class="a t" style="left:734.0px;width:200px;text-align:center;top:807.32px;font-size:15.8px;color:#111;">-78.70</div><div class="a t" style="left:836.0px;width:200px;text-align:center;top:807.32px;font-size:15.8px;color:#111;">0.7433</div><div class="a t" style="left:558.2px;top:830.82px;font-size:15.8px;color:#111;">Coma</div><div class="a t" style="left:630.5px;width:200px;text-align:center;top:830.82px;font-size:15.8px;color:#111;">1.1820</div><div class="a t" style="left:734.0px;width:200px;text-align:center;top:830.82px;font-size:15.8px;color:#111;">-131.05</div><div class="a t" style="left:836.0px;width:200px;text-align:center;top:830.82px;font-size:15.8px;color:#111;">0.2090</div><div class="a t" style="left:558.2px;top:854.32px;font-size:15.8px;color:#111;">Spherical</div><div class="a t" style="left:630.5px;width:200px;text-align:center;top:854.32px;font-size:15.8px;color:#111;">0.2524</div><div class="a t" style="left:836.0px;width:200px;text-align:center;top:854.32px;font-size:15.8px;color:#111;">0.0753</div><div class="a" style="left:516px;top:760.1px;width:17px;height:16.5px;background:#fff;border-top:2px solid #808080;border-left:2px solid #808080;border-bottom:1px solid #f0f0f0;border-right:1px solid #f0f0f0"></div><svg class="a" style="left:516px;top:760.10px" width="17" height="17"><path d="M4.2 8.2 L7 11.6 L13 4.5" fill="none" stroke="#000" stroke-width="2.6" stroke-linecap="square"/></svg><div class="a" style="left:516px;top:783.8000000000001px;width:17px;height:16.5px;background:#fff;border-top:2px solid #808080;border-left:2px solid #808080;border-bottom:1px solid #f0f0f0;border-right:1px solid #f0f0f0"></div><svg class="a" style="left:516px;top:783.80px" width="17" height="17"><path d="M4.2 8.2 L7 11.6 L13 4.5" fill="none" stroke="#000" stroke-width="2.6" stroke-linecap="square"/></svg><div class="a" style="left:516px;top:807.3000000000001px;width:17px;height:16.5px;background:#fff;border-top:2px solid #808080;border-left:2px solid #808080;border-bottom:1px solid #f0f0f0;border-right:1px solid #f0f0f0"></div><div class="a" style="left:516px;top:830.8000000000001px;width:17px;height:16.5px;background:#fff;border-top:2px solid #808080;border-left:2px solid #808080;border-bottom:1px solid #f0f0f0;border-right:1px solid #f0f0f0"></div><div class="a" style="left:516px;top:854.3000000000001px;width:17px;height:16.5px;background:#fff;border-top:2px solid #808080;border-left:2px solid #808080;border-bottom:1px solid #f0f0f0;border-right:1px solid #f0f0f0"></div><div class="a" style="left:61px;top:636.2px;width:2px;height:11.5px;background:#f0f0f0"></div><div class="a" style="left:180px;top:636.2px;width:2px;height:11.5px;background:#f0f0f0"></div><div class="a" style="left:61px;top:645.8px;width:121px;height:2px;background:#f0f0f0"></div><div class="a t " style="left:95.0px;top:625.05px;font-size:18px;color:#f4f4f4;transform:scaleX(0.79);transform-origin:0 0">100</div><div class="a t " style="left:123.6px;top:627.17px;font-size:15.5px;color:#f4f4f4;transform:scaleX(0.86);transform-origin:0 0">mm</div><div class="a" style="left:484px;top:690px;width:2px;height:206px;background:#55595f"></div></body></html>
